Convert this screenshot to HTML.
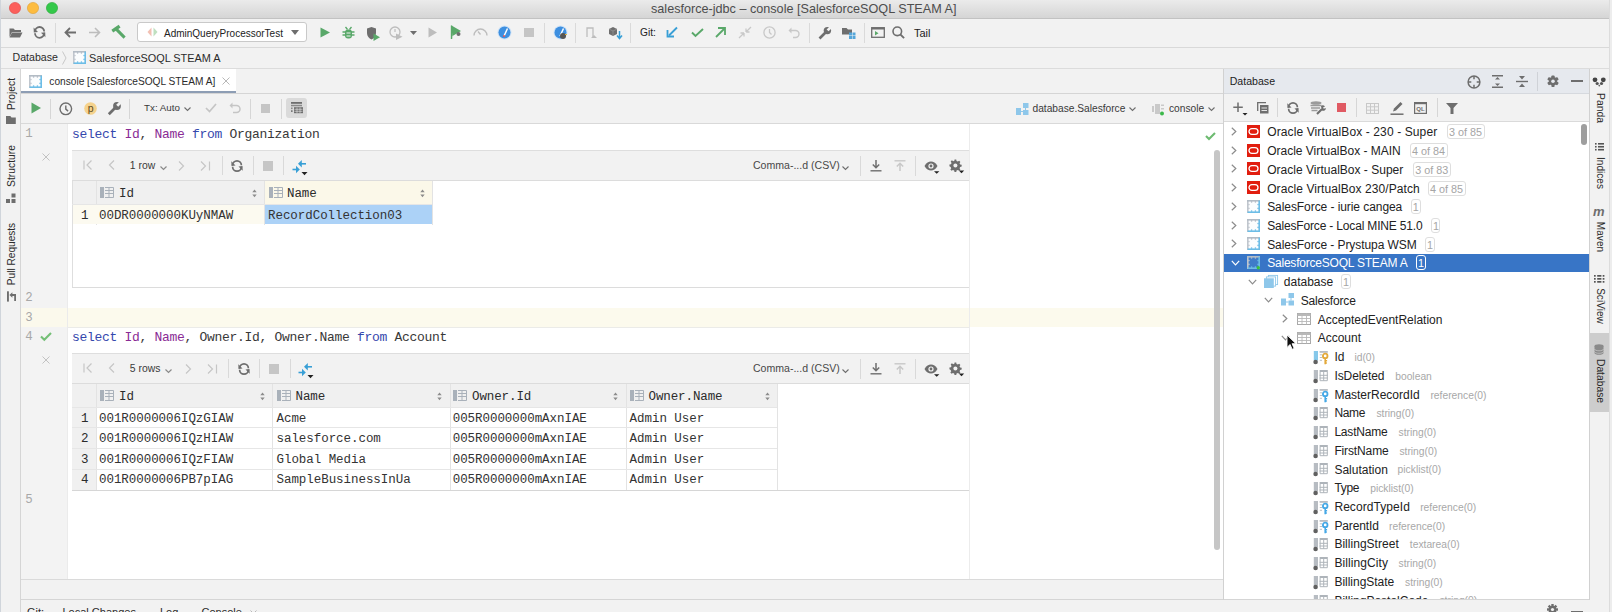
<!DOCTYPE html><html><head><meta charset="utf-8"><style>
html,body{margin:0;padding:0;width:1612px;height:612px;overflow:hidden;background:#f2f2f2;}
.r{position:absolute;display:block;}
.t{position:absolute;white-space:nowrap;}
svg{overflow:visible}
</style></head><body>
<div class="r" style="left:0px;top:0px;width:1612px;height:18px;background:linear-gradient(#ebebeb,#d5d5d5);"></div>
<div class="r" style="left:0px;top:18px;width:1612px;height:1px;background:#c2c2c2;"></div>
<svg class="r" style="left:8.5px;top:2px" width="12" height="12" viewBox="0 0 12 12"><circle cx="6" cy="6" r="5.6" fill="#fc605c" stroke="#df4744" stroke-width="0.6"/></svg>
<svg class="r" style="left:26.799999999999997px;top:2px" width="12" height="12" viewBox="0 0 12 12"><circle cx="6" cy="6" r="5.6" fill="#fdbc40" stroke="#de9f34" stroke-width="0.6"/></svg>
<svg class="r" style="left:45.6px;top:2px" width="12" height="12" viewBox="0 0 12 12"><circle cx="6" cy="6" r="5.6" fill="#34c84a" stroke="#27aa35" stroke-width="0.6"/></svg>
<div class="t" style="left:651.00px;top:1.57px;font-size:12.63px;line-height:14.11px;color:#4d4d4d;font-family:'Liberation Sans', sans-serif;">salesforce-jdbc – console [SalesforceSOQL STEAM A]</div>
<div class="r" style="left:0px;top:19px;width:1612px;height:28px;background:#f2f2f2;"></div>
<div class="r" style="left:0px;top:47px;width:1612px;height:1px;background:#d9d9d9;"></div>
<svg class="r" style="left:9px;top:27px" width="14" height="11" viewBox="0 0 14 11"><path d="M0.5 1.5h4l1.5 1.5h6v2H3L0.5 10z" fill="#6e6e6e"/><path d="M3 5.5h10.5L11 10.5H0.5z" fill="#6e6e6e"/></svg>
<svg class="r" style="left:33px;top:26px" width="13" height="13" viewBox="0 0 13 13"><path d="M2 5.6A4.6 4.6 0 0 1 11.2 5.6" fill="none" stroke="#6e6e6e" stroke-width="1.8"/><path d="M0.6 1.6L0.8 6.6 5 6.1z" fill="#6e6e6e"/><path d="M2 7.2A4.6 4.6 0 0 0 11.2 7.2" fill="none" stroke="#6e6e6e" stroke-width="1.8"/><path d="M12.4 11.2L12.2 6.3 8 6.8z" fill="#6e6e6e"/></svg>
<div class="r" style="left:55px;top:23px;width:1px;height:20px;background:#dadada;"></div>
<svg class="r" style="left:64px;top:27px" width="13" height="11" viewBox="0 0 13 11"><path d="M12 5.5H2M6 1L1.5 5.5 6 10" fill="none" stroke="#6e6e6e" stroke-width="1.8"/></svg>
<svg class="r" style="left:88px;top:27px" width="13" height="11" viewBox="0 0 13 11"><path d="M1 5.5h10M7 1l4.5 4.5L7 10" fill="none" stroke="#bdbdbd" stroke-width="1.6"/></svg>
<svg class="r" style="left:111px;top:25px" width="15" height="15" viewBox="0 0 15 15"><path d="M1.3 6.2L8.6 1.2" stroke="#59a869" stroke-width="3.3"/><path d="M4.8 3.6L13.6 12.6" stroke="#59a869" stroke-width="3"/></svg>
<div class="r" style="left:137px;top:22px;width:170px;height:20px;background:#ffffff;border:1px solid #c9c9c9;border-radius:3px;box-sizing:border-box;"></div>
<svg class="r" style="left:147px;top:27px" width="11" height="10" viewBox="0 0 11 10"><path d="M4.5 0.5L0.5 5l4 4.5z" fill="#f2c0b3"/><path d="M6.5 0.5l4 4.5-4 4.5z" fill="#bfe0c0"/></svg>
<div class="t" style="left:164.00px;top:27.55px;font-size:10px;line-height:11.17px;color:#222;font-family:'Liberation Sans', sans-serif;">AdminQueryProcessorTest</div>
<svg class="r" style="left:291px;top:30px" width="8" height="5" viewBox="0 0 8 5"><path d="M0 0h8L4 5z" fill="#6e6e6e"/></svg>
<svg class="r" style="left:320px;top:27px" width="10" height="11" viewBox="0 0 10 11"><path d="M0.5 0.5L10 5.5 0.5 10.5z" fill="#59a869"/></svg>
<svg class="r" style="left:342px;top:26px" width="13" height="13" viewBox="0 0 13 13"><path d="M3.5 1l2 2.5M9.5 1l-2 2.5" stroke="#59a869" stroke-width="1.3"/><rect x="3" y="3.5" width="7" height="9" rx="3" fill="#59a869"/><path d="M0.5 6h12M0.5 9h12" stroke="#59a869" stroke-width="1.3"/><path d="M4.5 7h4M4.5 10h4" stroke="#f2f2f2" stroke-width="1"/></svg>
<svg class="r" style="left:366px;top:27px" width="15" height="14" viewBox="0 0 15 14"><path d="M1 1.5L5.5 0 10 1.5v4.5c0 3-2 5.5-4.5 6.5C3 11.5 1 9 1 6z" fill="#6e6e6e"/><path d="M7.5 6.5l6.5 3.8-6.5 3.7z" fill="#59a869"/></svg>
<svg class="r" style="left:389px;top:26px" width="14" height="14" viewBox="0 0 14 14"><circle cx="6" cy="6" r="5" fill="none" stroke="#bdbdbd" stroke-width="1.3"/><path d="M6 3v3" stroke="#bdbdbd" stroke-width="1.2"/><path d="M7 7.5l6.5 3.2-6.5 3.3z" fill="#bdbdbd"/></svg>
<svg class="r" style="left:410px;top:31px" width="7" height="4" viewBox="0 0 7 4"><path d="M0 0h7L3.5 4z" fill="#6e6e6e"/></svg>
<svg class="r" style="left:428px;top:27px" width="9" height="11" viewBox="0 0 9 11"><path d="M0.5 0.5L9 5.5 0.5 10.5z" fill="#bdbdbd"/></svg>
<svg class="r" style="left:451px;top:25px" width="11" height="14" viewBox="0 0 11 14"><path d="M0.5 0.5l9.5 5.5L1.5 11 1.5 14z" fill="#59a869"/><path d="M0.5 0.5v13.5" stroke="#59a869" stroke-width="1.4"/><circle cx="7.5" cy="9" r="2" fill="#6e6e6e"/></svg>
<svg class="r" style="left:473px;top:28px" width="15" height="8" viewBox="0 0 15 8"><path d="M1 7.5a6.5 6.5 0 0 1 13 0" fill="none" stroke="#bdbdbd" stroke-width="1.4"/><path d="M5 3.5l2.5 3" stroke="#bdbdbd" stroke-width="1.3"/></svg>
<svg class="r" style="left:497px;top:25px" width="15" height="15" viewBox="0 0 15 15"><circle cx="7.5" cy="7.5" r="7" fill="#cfe3f7"/><circle cx="7.5" cy="7.5" r="6" fill="#3d8fe0"/><path d="M10.5 3.5L7 11" stroke="#fff" stroke-width="1.5"/><circle cx="7" cy="11" r="1" fill="#e05555"/></svg>
<svg class="r" style="left:524px;top:28px" width="10" height="9" viewBox="0 0 10 9"><rect width="10" height="9" fill="#c5c5c5"/></svg>
<div class="r" style="left:544px;top:23px;width:1px;height:20px;background:#dadada;"></div>
<svg class="r" style="left:553px;top:25px" width="15" height="15" viewBox="0 0 15 15"><circle cx="7.5" cy="7.5" r="7" fill="#cfe3f7"/><circle cx="7.5" cy="7.5" r="6" fill="#3d8fe0"/><path d="M10.5 3.5L7 11" stroke="#fff" stroke-width="1.5"/><circle cx="10" cy="11" r="3" fill="#555"/><path d="M12 9.5l2 0" stroke="#e0b040" stroke-width="1"/></svg>
<div class="r" style="left:575px;top:23px;width:1px;height:20px;background:#dadada;"></div>
<svg class="r" style="left:586px;top:27px" width="12" height="12" viewBox="0 0 12 12"><path d="M1 10V1h6v9" fill="none" stroke="#bdbdbd" stroke-width="1.3"/><path d="M5 11l3-3 3 3z" fill="#bdbdbd"/></svg>
<svg class="r" style="left:608px;top:26px" width="15" height="14" viewBox="0 0 15 14"><path d="M1 3l4-2 4 2v5l-4 2-4-2z" fill="#6e6e6e"/><path d="M1 3l4 2 4-2M5 5v5" stroke="#9a9a9a" stroke-width="0.7" fill="none"/><path d="M11.5 5v7M9 9.5l2.5 3 2.5-3" fill="none" stroke="#389fd6" stroke-width="1.5"/></svg>
<div class="r" style="left:630px;top:23px;width:1px;height:20px;background:#dadada;"></div>
<div class="t" style="left:640.00px;top:27.37px;font-size:10.2px;line-height:11.40px;color:#222;font-family:'Liberation Sans', sans-serif;">Git:</div>
<svg class="r" style="left:667px;top:27px" width="11" height="10" viewBox="0 0 11 10"><path d="M10 0.5L2 8.5" stroke="#389fd6" stroke-width="1.8"/><path d="M0.5 3v6.5H7" fill="none" stroke="#389fd6" stroke-width="1.8"/></svg>
<svg class="r" style="left:691px;top:28px" width="13" height="9" viewBox="0 0 13 9"><path d="M1 4.5l3.5 3.5L12 1" fill="none" stroke="#59a869" stroke-width="1.9"/></svg>
<svg class="r" style="left:715px;top:27px" width="11" height="11" viewBox="0 0 11 11"><path d="M1 10L9.5 1.5" stroke="#59a869" stroke-width="1.8"/><path d="M3 1h7v7" fill="none" stroke="#59a869" stroke-width="1.8"/></svg>
<svg class="r" style="left:738px;top:26px" width="14" height="13" viewBox="0 0 14 13"><path d="M1 12l5-5M6 7H2.5M6 7v3.5" fill="none" stroke="#c8c8c8" stroke-width="1.3"/><path d="M13 1L8 6M8 6h3.5M8 6V2.5" fill="none" stroke="#c8c8c8" stroke-width="1.3"/></svg>
<svg class="r" style="left:763px;top:26px" width="13" height="13" viewBox="0 0 13 13"><circle cx="6.5" cy="6.5" r="5.6" fill="none" stroke="#c8c8c8" stroke-width="1.3"/><path d="M6.5 3v3.5l2 2" fill="none" stroke="#c8c8c8" stroke-width="1.3"/></svg>
<svg class="r" style="left:788px;top:27px" width="12" height="12" viewBox="0 0 12 12"><path d="M3 3.5h4.5a3.5 3.5 0 0 1 0 7H5" fill="none" stroke="#c8c8c8" stroke-width="1.4"/><path d="M0.5 3.5L3.5 0.5v6z" fill="#c8c8c8"/></svg>
<div class="r" style="left:809px;top:23px;width:1px;height:20px;background:#dadada;"></div>
<svg class="r" style="left:818px;top:25.5px" width="14" height="14" viewBox="0 0 14 14"><path d="M1.5 12.5L7.5 6.5" stroke="#6e6e6e" stroke-width="2.6"/><circle cx="9.4" cy="4.6" r="3.7" fill="#6e6e6e"/><path d="M9.6 4.4L13.8 0.2" stroke="#f2f2f2" stroke-width="2.7"/></svg>
<svg class="r" style="left:842px;top:27px" width="14" height="12" viewBox="0 0 14 12"><path d="M0 1h4.5l1.5 1.5H10v5H0z" fill="#6e6e6e"/><rect x="7" y="5.5" width="3" height="3" fill="#55a6d9"/><rect x="10.5" y="5.5" width="3" height="3" fill="#55a6d9"/><rect x="7" y="9" width="3" height="3" fill="#55a6d9"/><rect x="10.5" y="9" width="3" height="3" fill="#55a6d9"/></svg>
<div class="r" style="left:864px;top:23px;width:1px;height:20px;background:#dadada;"></div>
<svg class="r" style="left:871px;top:27px" width="14" height="11" viewBox="0 0 14 11"><rect x="0.7" y="0.7" width="12.6" height="9.6" fill="none" stroke="#6e6e6e" stroke-width="1.3"/><rect x="0.7" y="0.7" width="12.6" height="1.8" fill="#6e6e6e"/><path d="M4 4v4.5l3.5-2.2z" fill="#59a869"/></svg>
<svg class="r" style="left:892px;top:26px" width="13" height="13" viewBox="0 0 13 13"><circle cx="5.3" cy="5.3" r="4.3" fill="none" stroke="#6e6e6e" stroke-width="1.6"/><path d="M8.3 8.3l3.8 3.8" stroke="#6e6e6e" stroke-width="1.9"/></svg>
<div class="t" style="left:914.00px;top:26.94px;font-size:11px;line-height:12.29px;color:#222;font-family:'Liberation Sans', sans-serif;">Tail</div>
<div class="r" style="left:0px;top:48px;width:1612px;height:20px;background:#f2f2f2;"></div>
<div class="r" style="left:0px;top:68px;width:1612px;height:1px;background:#dcdcdc;"></div>
<div class="t" style="left:12.50px;top:52.10px;font-size:10.6px;line-height:11.84px;color:#2b2b2b;font-family:'Liberation Sans', sans-serif;">Database</div>
<svg class="r" style="left:62px;top:51px" width="5" height="14" viewBox="0 0 5 14"><path d="M0.5 0.5L4 7 0.5 13.5" fill="none" stroke="#c8c8c8" stroke-width="1"/></svg>
<svg class="r" style="left:73px;top:50.5px" width="13" height="13" viewBox="0 0 13 13"><rect x="0" y="0" width="13" height="13" fill="#fbfdfe"/><rect x="0" y="0" width="1.6" height="13" fill="#c0c6cd"/><rect x="0" y="0" width="13" height="1.6" fill="#b3bcc5"/><rect x="11.4" y="0.6" width="1.6" height="12.4" fill="#6cbde6"/><rect x="0.6" y="11.4" width="12.4" height="1.6" fill="#6cbde6"/><circle cx="4.6" cy="1.9" r="0.8" fill="#b3bcc5"/><circle cx="8.4" cy="1.9" r="0.8" fill="#b3bcc5"/><circle cx="1.9" cy="4.6" r="0.8" fill="#c0c6cd"/><circle cx="1.9" cy="8.4" r="0.8" fill="#c0c6cd"/><circle cx="11.1" cy="4.6" r="0.8" fill="#6cbde6"/><circle cx="11.1" cy="8.4" r="0.8" fill="#6cbde6"/><circle cx="4.6" cy="11.1" r="0.8" fill="#6cbde6"/><circle cx="8.4" cy="11.1" r="0.8" fill="#6cbde6"/></svg>
<div class="t" style="left:89.00px;top:51.83px;font-size:10.9px;line-height:12.18px;color:#2b2b2b;font-family:'Liberation Sans', sans-serif;">SalesforceSOQL STEAM A</div>
<div class="r" style="left:0px;top:69px;width:20px;height:543px;background:#f2f2f2;"></div>
<div class="r" style="left:20px;top:69px;width:1px;height:543px;background:#d5d5d5;"></div>
<div class="r" style="left:0px;top:0px;width:1px;height:612px;background:#d0d5db;"></div>
<div class="t" style="left:12.1px;top:93.5px;font-size:10.3px;line-height:11.85px;color:#2b2b2b;font-family:'Liberation Sans', sans-serif;transform:translate(-50%,-50%) rotate(-90deg);">Project</div>
<svg class="r" style="left:6px;top:116px" width="10" height="8" viewBox="0 0 10 8"><path d="M0 0h4.3l1.2 1.6H9.8V8H0z" fill="#6e6e6e"/></svg>
<div class="t" style="left:12.1px;top:166px;font-size:10.3px;line-height:11.85px;color:#2b2b2b;font-family:'Liberation Sans', sans-serif;transform:translate(-50%,-50%) rotate(-90deg);">Structure</div>
<svg class="r" style="left:6px;top:193px" width="10" height="10" viewBox="0 0 10 10"><rect x="0" y="6" width="4" height="4" fill="#6e6e6e"/><rect x="5.5" y="6" width="4" height="4" fill="#6e6e6e"/><rect x="5.5" y="0.5" width="4" height="4" fill="#6e6e6e"/></svg>
<div class="t" style="left:12.1px;top:254px;font-size:10.1px;line-height:11.61px;color:#2b2b2b;font-family:'Liberation Sans', sans-serif;transform:translate(-50%,-50%) rotate(-90deg);">Pull Requests</div>
<svg class="r" style="left:6px;top:290.5px" width="11" height="11" viewBox="0 0 11 11"><rect x="1" y="0.3" width="1.9" height="10.3" fill="#6e6e6e"/><path d="M5.5 4H9.1V10" fill="none" stroke="#6e6e6e" stroke-width="1.8"/><path d="M3.4 4L6.4 1.2v5.6z" fill="#6e6e6e"/></svg>
<div class="r" style="left:21px;top:69px;width:1202px;height:24px;background:#f2f2f2;"></div>
<div class="r" style="left:21px;top:69px;width:215px;height:22px;background:#ffffff;"></div>
<div class="r" style="left:21px;top:91px;width:215px;height:2px;background:#8d9db4;"></div>
<div class="r" style="left:21px;top:93px;width:1202px;height:1px;background:#d5d5d5;"></div>
<svg class="r" style="left:29px;top:74.5px" width="13" height="13" viewBox="0 0 13 13"><rect x="0" y="0" width="13" height="13" fill="#fbfdfe"/><rect x="0" y="0" width="1.6" height="13" fill="#c0c6cd"/><rect x="0" y="0" width="13" height="1.6" fill="#b3bcc5"/><rect x="11.4" y="0.6" width="1.6" height="12.4" fill="#6cbde6"/><rect x="0.6" y="11.4" width="12.4" height="1.6" fill="#6cbde6"/><circle cx="4.6" cy="1.9" r="0.8" fill="#b3bcc5"/><circle cx="8.4" cy="1.9" r="0.8" fill="#b3bcc5"/><circle cx="1.9" cy="4.6" r="0.8" fill="#c0c6cd"/><circle cx="1.9" cy="8.4" r="0.8" fill="#c0c6cd"/><circle cx="11.1" cy="4.6" r="0.8" fill="#6cbde6"/><circle cx="11.1" cy="8.4" r="0.8" fill="#6cbde6"/><circle cx="4.6" cy="11.1" r="0.8" fill="#6cbde6"/><circle cx="8.4" cy="11.1" r="0.8" fill="#6cbde6"/></svg>
<div class="t" style="left:49.30px;top:75.79px;font-size:10.17px;line-height:11.36px;color:#2b2b2b;font-family:'Liberation Sans', sans-serif;">console [SalesforceSOQL STEAM A]</div>
<svg class="r" style="left:222px;top:77px" width="8" height="8" viewBox="0 0 8 8"><path d="M0.5 0.5l7 7M7.5 0.5l-7 7" stroke="#b8b8b8" stroke-width="1"/></svg>
<div class="r" style="left:21px;top:94px;width:1202px;height:29px;background:#f2f2f2;"></div>
<div class="r" style="left:21px;top:123px;width:1202px;height:1px;background:#d9d9d9;"></div>
<svg class="r" style="left:31px;top:102px" width="10" height="12" viewBox="0 0 10 12"><path d="M0.5 0.5L10 6 0.5 11.5z" fill="#59a869"/></svg>
<div class="r" style="left:50px;top:99px;width:1px;height:20px;background:#d6d6d6;"></div>
<svg class="r" style="left:59px;top:101.5px" width="14" height="14" viewBox="0 0 14 14"><circle cx="6.8" cy="6.8" r="5.8" fill="none" stroke="#6e6e6e" stroke-width="1.4"/><path d="M6.8 3.5v3.6l2.3 2" fill="none" stroke="#6e6e6e" stroke-width="1.4"/></svg>
<svg class="r" style="left:83.5px;top:101.5px" width="13" height="13" viewBox="0 0 13 13"><circle cx="6.5" cy="6.5" r="6.3" fill="#f5d28c"/><text x="6.6" y="10.3" font-size="10.5" font-family="Liberation Sans" fill="#5e4c22" text-anchor="middle">p</text></svg>
<svg class="r" style="left:107px;top:101px" width="15" height="15" viewBox="0 0 15 15"><path d="M1.8 13.2L8 7" stroke="#6e6e6e" stroke-width="2.7"/><circle cx="10" cy="5" r="3.9" fill="#6e6e6e"/><path d="M10.2 4.8L14.5 0.5" stroke="#f2f2f2" stroke-width="2.8"/></svg>
<div class="r" style="left:129px;top:99px;width:1px;height:20px;background:#d6d6d6;"></div>
<div class="t" style="left:144.00px;top:102.63px;font-size:9.8px;line-height:10.95px;color:#3a3a3a;font-family:'Liberation Sans', sans-serif;">Tx: Auto</div>
<svg class="r" style="left:184px;top:107px" width="7" height="5" viewBox="0 0 7 5"><path d="M0.5 0.5l3 3 3-3" fill="none" stroke="#6e6e6e" stroke-width="1.1"/></svg>
<svg class="r" style="left:205px;top:103px" width="12" height="10" viewBox="0 0 12 10"><path d="M1 5l3.5 3.5L11 1" fill="none" stroke="#c5c5c5" stroke-width="1.7"/></svg>
<svg class="r" style="left:229px;top:102px" width="12" height="12" viewBox="0 0 12 12"><path d="M3 3.5h4.5a3.5 3.5 0 0 1 0 7H4" fill="none" stroke="#c5c5c5" stroke-width="1.5"/><path d="M0.5 3.5L3.5 0.5v6z" fill="#c5c5c5"/></svg>
<div class="r" style="left:250px;top:99px;width:1px;height:20px;background:#d6d6d6;"></div>
<div class="r" style="left:261px;top:104px;width:9px;height:9px;background:#c5c5c5;"></div>
<div class="r" style="left:281px;top:99px;width:1px;height:20px;background:#d6d6d6;"></div>
<div class="r" style="left:286px;top:98px;width:21px;height:20px;background:#dadada;border-radius:3px;"></div>
<svg class="r" style="left:291px;top:102px" width="12" height="12" viewBox="0 0 12 12"><rect x="0" y="0" width="11" height="1.8" fill="#6e6e6e"/><rect x="0" y="2.8" width="11" height="1.5" fill="#8a8a8a"/><rect x="0" y="5.5" width="1.6" height="1.6" fill="#8a8a8a"/><rect x="0" y="8.3" width="1.6" height="1.6" fill="#6e6e6e"/><rect x="3" y="5.2" width="9" height="6" fill="#6e6e6e"/><path d="M3.5 7.3h8M3.5 9.3h8M6 5.5v5.5M9 5.5v5.5" stroke="#e8e8e8" stroke-width="0.6"/></svg>
<svg class="r" style="left:1016px;top:103px" width="13" height="12" viewBox="0 0 13 12"><rect x="0" y="5" width="5" height="7" fill="#8ec7ea"/><rect x="7" y="0" width="5.5" height="5" fill="#8ec7ea"/><rect x="7" y="7" width="5.5" height="5" fill="#8ec7ea"/><path d="M5 8.5h2M9.5 5v2" stroke="#8ec7ea" stroke-width="1"/></svg>
<div class="t" style="left:1032.50px;top:102.97px;font-size:10.2px;line-height:11.40px;color:#3a3a3a;font-family:'Liberation Sans', sans-serif;">database.Salesforce</div>
<svg class="r" style="left:1129px;top:107px" width="7" height="5" viewBox="0 0 7 5"><path d="M0.5 0.5l3 3 3-3" fill="none" stroke="#6e6e6e" stroke-width="1.1"/></svg>
<svg class="r" style="left:1152px;top:103px" width="14" height="13" viewBox="0 0 14 13"><rect x="0" y="3" width="2" height="6" fill="#c9c9c9"/><rect x="3" y="1" width="5" height="10" fill="#c9c9c9"/><rect x="9" y="1.5" width="3" height="1.5" fill="#c9c9c9"/><rect x="9" y="5" width="3" height="1.5" fill="#c9c9c9"/><circle cx="10" cy="10.5" r="2" fill="#3cb84a"/></svg>
<div class="t" style="left:1169.00px;top:102.97px;font-size:10.2px;line-height:11.40px;color:#3a3a3a;font-family:'Liberation Sans', sans-serif;">console</div>
<svg class="r" style="left:1208px;top:107px" width="7" height="5" viewBox="0 0 7 5"><path d="M0.5 0.5l3 3 3-3" fill="none" stroke="#6e6e6e" stroke-width="1.1"/></svg>
<div class="r" style="left:21px;top:124px;width:1202px;height:455px;background:#ffffff;"></div>
<div class="r" style="left:21px;top:124px;width:46px;height:455px;background:#f3f3f3;"></div>
<div class="r" style="left:67px;top:124px;width:1px;height:455px;background:#ebebeb;"></div>
<div class="r" style="left:969px;top:124px;width:1px;height:455px;background:#ececec;"></div>
<div class="r" style="left:21px;top:308px;width:46px;height:19px;background:#fbf9ec;"></div>
<div class="r" style="left:68px;top:308px;width:901px;height:19px;background:#fcfaed;"></div>
<div class="r" style="left:970px;top:308px;width:253px;height:19px;background:#fcfaed;"></div>
<div class="r" style="left:68px;top:327px;width:901px;height:1px;background:#ebebe8;"></div>
<div class="t" style="left:25.30px;top:127.28px;font-size:12.4px;line-height:14.05px;color:#a8a8a8;font-family:'Liberation Mono', monospace;letter-spacing:-0.3px;">1</div>
<div class="t" style="left:25.30px;top:291.28px;font-size:12.4px;line-height:14.05px;color:#a8a8a8;font-family:'Liberation Mono', monospace;letter-spacing:-0.3px;">2</div>
<div class="t" style="left:25.30px;top:310.78px;font-size:12.4px;line-height:14.05px;color:#a8a8a8;font-family:'Liberation Mono', monospace;letter-spacing:-0.3px;">3</div>
<div class="t" style="left:25.30px;top:330.28px;font-size:12.4px;line-height:14.05px;color:#a8a8a8;font-family:'Liberation Mono', monospace;letter-spacing:-0.3px;">4</div>
<div class="t" style="left:25.30px;top:493.48px;font-size:12.4px;line-height:14.05px;color:#a8a8a8;font-family:'Liberation Mono', monospace;letter-spacing:-0.3px;">5</div>
<svg class="r" style="left:41.5px;top:152.8px" width="8" height="8" viewBox="0 0 8 8"><path d="M0.5 0.5l7 7M7.5 0.5l-7 7" stroke="#c2c2c2" stroke-width="1"/></svg>
<svg class="r" style="left:41.5px;top:356px" width="8" height="8" viewBox="0 0 8 8"><path d="M0.5 0.5l7 7M7.5 0.5l-7 7" stroke="#c2c2c2" stroke-width="1"/></svg>
<svg class="r" style="left:39.5px;top:332px" width="12" height="9" viewBox="0 0 12 9"><path d="M1 4.5l3.3 3.3L11 1" fill="none" stroke="#74bf76" stroke-width="2.1"/></svg>
<div class="t" style="left:71.90px;top:127.58px;font-size:13px;line-height:14.73px;color:#383838;font-family:'Liberation Mono', monospace;letter-spacing:-0.3px;"><span style="color:#3448ad">select</span><span style="color:#383838"> </span><span style="color:#8a2b95">Id</span><span style="color:#383838">, </span><span style="color:#8a2b95">Name</span><span style="color:#383838"> </span><span style="color:#3448ad">from</span><span style="color:#383838"> Organization</span></div>
<div class="t" style="left:71.90px;top:331.18px;font-size:13px;line-height:14.73px;color:#383838;font-family:'Liberation Mono', monospace;letter-spacing:-0.3px;"><span style="color:#3448ad">select</span><span style="color:#383838"> </span><span style="color:#8a2b95">Id</span><span style="color:#383838">, </span><span style="color:#8a2b95">Name</span><span style="color:#383838">, Owner.Id, Owner.Name </span><span style="color:#3448ad">from</span><span style="color:#383838"> Account</span></div>
<svg class="r" style="left:1205px;top:132px" width="11" height="8" viewBox="0 0 11 8"><path d="M1 4l3 3 6-6" fill="none" stroke="#6dbb70" stroke-width="2.1"/></svg>
<div class="r" style="left:1213.5px;top:150px;width:6.5px;height:400px;background:#c6c6c6;border-radius:3.5px;"></div>
<div class="r" style="left:21px;top:579px;width:1202px;height:1px;background:#dadada;"></div>
<div class="r" style="left:21px;top:580px;width:1202px;height:19px;background:#f2f2f2;"></div>
<div class="r" style="left:72px;top:150px;width:897px;height:138px;background:#ffffff;box-sizing:border-box;border:1px solid #dedede;border-right:none;"></div>
<div class="r" style="left:72px;top:151px;width:897px;height:29px;background:#f2f2f2;"></div>
<div class="r" style="left:72px;top:180px;width:897px;height:1px;background:#dcdcdc;"></div>
<svg class="r" style="left:82.5px;top:160px" width="10" height="10" viewBox="0 0 10 10"><path d="M1 0.5v9M8.5 0.5L4 5l4.5 4.5" fill="none" stroke="#c6c6c6" stroke-width="1.2"/></svg>
<svg class="r" style="left:108px;top:160px" width="7" height="10" viewBox="0 0 7 10"><path d="M6 0.5L1.5 5 6 9.5" fill="none" stroke="#c6c6c6" stroke-width="1.2"/></svg>
<div class="t" style="left:129.80px;top:159.88px;font-size:10.4px;line-height:11.62px;color:#3a3a3a;font-family:'Liberation Sans', sans-serif;">1 row</div>
<svg class="r" style="left:159.78px;top:165.5px" width="7" height="5" viewBox="0 0 7 5"><path d="M0.5 0.5l3 3 3-3" fill="none" stroke="#8a8a8a" stroke-width="1.2"/></svg>
<div class="t" style="left:753.00px;top:160.25px;font-size:10.55px;line-height:11.79px;color:#484848;font-family:'Liberation Sans', sans-serif;">Comma-...d (CSV)</div>
<svg class="r" style="left:842px;top:165.8px" width="7" height="5" viewBox="0 0 7 5"><path d="M0.5 0.5l3 3 3-3" fill="none" stroke="#6e6e6e" stroke-width="1.1"/></svg>
<div class="r" style="left:860px;top:155.8px;width:1px;height:20px;background:#d9d9d9;"></div>
<svg class="r" style="left:870px;top:159.8px" width="12" height="12" viewBox="0 0 12 12"><path d="M6 0v7M2.8 4.5L6 7.7l3.2-3.2" fill="none" stroke="#6e6e6e" stroke-width="1.5"/><path d="M0.5 10.8h11" stroke="#6e6e6e" stroke-width="1.4"/></svg>
<svg class="r" style="left:894px;top:159.8px" width="12" height="12" viewBox="0 0 12 12"><path d="M6 11V4M2.8 6.5L6 3.3l3.2 3.2" fill="none" stroke="#c8c8c8" stroke-width="1.5"/><path d="M0.5 0.8h11" stroke="#c8c8c8" stroke-width="1.4"/></svg>
<div class="r" style="left:915px;top:155.8px;width:1px;height:20px;background:#d9d9d9;"></div>
<svg class="r" style="left:924px;top:160.8px" width="15" height="10" viewBox="0 0 15 10"><path d="M0.5 5C2.5 1.5 4.5 0.5 7 0.5S11.5 1.5 13.5 5C11.5 8.5 9.5 9.5 7 9.5S2.5 8.5 0.5 5z" fill="#6e6e6e"/><circle cx="7" cy="5" r="2.6" fill="#f2f2f2"/><circle cx="7" cy="5" r="1.4" fill="#6e6e6e"/><path d="M10 10.2h5.4l-2.7 2.6z" fill="#222"/></svg>
<svg class="r" style="left:949px;top:158.8px" width="15" height="14" viewBox="0 0 15 14"><path d="M6.5 0.5h2l0.4 1.8 1.5 0.7 1.6-1 1.4 1.4-1 1.6 0.7 1.5 1.8 0.4v2l-1.8 0.4-0.7 1.5 1 1.6-1.4 1.4-1.6-1-1.5 0.7-0.4 1.8h-2l-0.4-1.8-1.5-0.7-1.6 1-1.4-1.4 1-1.6-0.7-1.5L0.5 8.5v-2l1.8-0.4 0.7-1.5-1-1.6 1.4-1.4 1.6 1 1.5-0.7z" fill="#6e6e6e" transform="scale(0.85)"/><circle cx="6.4" cy="6.4" r="2" fill="#f2f2f2"/><path d="M9.8 11.6h5.4l-2.7 2.6z" fill="#222"/></svg>
<div class="r" style="left:221.5px;top:156.0px;width:1px;height:19px;background:#d9d9d9;"></div>
<div class="r" style="left:252.5px;top:156.0px;width:1px;height:19px;background:#d9d9d9;"></div>
<div class="r" style="left:283px;top:156.0px;width:1px;height:19px;background:#d9d9d9;"></div>
<svg class="r" style="left:178px;top:160.8px" width="7" height="10" viewBox="0 0 7 10"><path d="M1 0.5L5.5 5 1 9.5" fill="none" stroke="#c6c6c6" stroke-width="1.2"/></svg>
<svg class="r" style="left:200px;top:160.8px" width="11" height="10" viewBox="0 0 11 10"><path d="M1 0.5L5.5 5 1 9.5M9.5 0.5v9" fill="none" stroke="#c6c6c6" stroke-width="1.2"/></svg>
<svg class="r" style="left:231px;top:159.8px" width="12" height="12" viewBox="0 0 12 12"><path d="M1.6 5.2A4.4 4.4 0 0 1 10.4 5.2" fill="none" stroke="#6e6e6e" stroke-width="1.7"/><path d="M0.3 1.3L0.5 6.1 4.5 5.6z" fill="#6e6e6e"/><path d="M1.6 6.8A4.4 4.4 0 0 0 10.4 6.8" fill="none" stroke="#6e6e6e" stroke-width="1.7"/><path d="M11.7 10.7L11.5 5.9 7.5 6.4z" fill="#6e6e6e"/></svg>
<div class="r" style="left:262.5px;top:160.8px;width:10px;height:10px;background:#c6c6c6;"></div>
<svg class="r" style="left:291.5px;top:158.8px" width="16" height="17" viewBox="0 0 16 17"><path d="M0.5 10.5h4.5" stroke="#389fd6" stroke-width="1.6"/><path d="M4 6.8l3.8 3.7L4 14.2z" fill="#389fd6"/><path d="M9 4.8h5" stroke="#389fd6" stroke-width="1.6"/><path d="M9.8 1.1L6 4.8l3.8 3.7z" fill="#389fd6"/><path d="M9.5 13h6l-3 3.2z" fill="#222"/></svg>
<div class="r" style="left:73px;top:181px;width:191.5px;height:23px;background:#f0f0f0;"></div>
<div class="r" style="left:264.5px;top:181px;width:167.5px;height:23px;background:#fbf8e9;"></div>
<div class="r" style="left:96.4px;top:181px;width:1px;height:43.5px;background:#e3e3e3;"></div>
<div class="r" style="left:264px;top:181px;width:1px;height:43.5px;background:#e3e3e3;"></div>
<div class="r" style="left:432px;top:181px;width:1px;height:43.5px;background:#e3e3e3;"></div>
<div class="r" style="left:72px;top:204px;width:360px;height:1px;background:#e6e6e6;"></div>
<svg class="r" style="left:100px;top:187px" width="14" height="11" viewBox="0 0 14 11"><rect x="0" y="0" width="4" height="11" fill="#a9b1ba"/><rect x="5" y="0" width="9" height="11" fill="none"/><path d="M5 0.5h8.5v10H5M5 3.5h8.5M5 6.5h8.5M9 0.5v10" fill="none" stroke="#a9b1ba" stroke-width="1"/></svg>
<div class="t" style="left:119.00px;top:187.09px;font-size:12.5px;line-height:14.16px;color:#2b2b2b;font-family:'Liberation Mono', monospace;letter-spacing:-0.1px;">Id</div>
<svg class="r" style="left:251.5px;top:188.5px" width="5" height="9" viewBox="0 0 5 9"><path d="M0.3 3.3h4.4L2.5 0.6z M0.3 5.5h4.4L2.5 8.2z" fill="#8c8c8c"/></svg>
<svg class="r" style="left:268.5px;top:187px" width="14" height="11" viewBox="0 0 14 11"><rect x="0" y="0" width="4" height="11" fill="#a9b1ba"/><rect x="5" y="0" width="9" height="11" fill="none"/><path d="M5 0.5h8.5v10H5M5 3.5h8.5M5 6.5h8.5M9 0.5v10" fill="none" stroke="#a9b1ba" stroke-width="1"/></svg>
<div class="t" style="left:287.00px;top:187.09px;font-size:12.5px;line-height:14.16px;color:#2b2b2b;font-family:'Liberation Mono', monospace;letter-spacing:-0.1px;">Name</div>
<svg class="r" style="left:420px;top:188.5px" width="5" height="9" viewBox="0 0 5 9"><path d="M0.3 3.3h4.4L2.5 0.6z M0.3 5.5h4.4L2.5 8.2z" fill="#8c8c8c"/></svg>
<div class="r" style="left:73px;top:205px;width:191px;height:19px;background:#fcfaf0;"></div>
<div class="r" style="left:265px;top:205px;width:167px;height:19px;background:#acd2f7;"></div>
<div class="t" style="left:81.00px;top:209.09px;font-size:12.5px;line-height:14.16px;color:#2b2b2b;font-family:'Liberation Mono', monospace;">1</div>
<div class="t" style="left:99.00px;top:209.09px;font-size:12.5px;line-height:14.16px;color:#333333;font-family:'Liberation Mono', monospace;letter-spacing:-0.05px;">00DR0000000KUyNMAW</div>
<div class="t" style="left:268.00px;top:209.09px;font-size:12.5px;line-height:14.16px;color:#333333;font-family:'Liberation Mono', monospace;letter-spacing:-0.05px;">RecordCollection03</div>
<div class="r" style="left:72px;top:287px;width:897px;height:1px;background:#dcdcdc;"></div>
<div class="r" style="left:72px;top:353px;width:897px;height:138px;background:#ffffff;box-sizing:border-box;border:1px solid #dedede;border-right:none;"></div>
<div class="r" style="left:72px;top:354px;width:897px;height:29px;background:#f2f2f2;"></div>
<div class="r" style="left:72px;top:383px;width:897px;height:1px;background:#dcdcdc;"></div>
<svg class="r" style="left:82.5px;top:363px" width="10" height="10" viewBox="0 0 10 10"><path d="M1 0.5v9M8.5 0.5L4 5l4.5 4.5" fill="none" stroke="#c6c6c6" stroke-width="1.2"/></svg>
<svg class="r" style="left:108px;top:363px" width="7" height="10" viewBox="0 0 7 10"><path d="M6 0.5L1.5 5 6 9.5" fill="none" stroke="#c6c6c6" stroke-width="1.2"/></svg>
<div class="t" style="left:129.80px;top:362.88px;font-size:10.4px;line-height:11.62px;color:#3a3a3a;font-family:'Liberation Sans', sans-serif;">5 rows</div>
<svg class="r" style="left:164.98000000000002px;top:368.5px" width="7" height="5" viewBox="0 0 7 5"><path d="M0.5 0.5l3 3 3-3" fill="none" stroke="#8a8a8a" stroke-width="1.2"/></svg>
<div class="t" style="left:753.00px;top:363.25px;font-size:10.55px;line-height:11.79px;color:#484848;font-family:'Liberation Sans', sans-serif;">Comma-...d (CSV)</div>
<svg class="r" style="left:842px;top:368.8px" width="7" height="5" viewBox="0 0 7 5"><path d="M0.5 0.5l3 3 3-3" fill="none" stroke="#6e6e6e" stroke-width="1.1"/></svg>
<div class="r" style="left:860px;top:358.8px;width:1px;height:20px;background:#d9d9d9;"></div>
<svg class="r" style="left:870px;top:362.8px" width="12" height="12" viewBox="0 0 12 12"><path d="M6 0v7M2.8 4.5L6 7.7l3.2-3.2" fill="none" stroke="#6e6e6e" stroke-width="1.5"/><path d="M0.5 10.8h11" stroke="#6e6e6e" stroke-width="1.4"/></svg>
<svg class="r" style="left:894px;top:362.8px" width="12" height="12" viewBox="0 0 12 12"><path d="M6 11V4M2.8 6.5L6 3.3l3.2 3.2" fill="none" stroke="#c8c8c8" stroke-width="1.5"/><path d="M0.5 0.8h11" stroke="#c8c8c8" stroke-width="1.4"/></svg>
<div class="r" style="left:915px;top:358.8px;width:1px;height:20px;background:#d9d9d9;"></div>
<svg class="r" style="left:924px;top:363.8px" width="15" height="10" viewBox="0 0 15 10"><path d="M0.5 5C2.5 1.5 4.5 0.5 7 0.5S11.5 1.5 13.5 5C11.5 8.5 9.5 9.5 7 9.5S2.5 8.5 0.5 5z" fill="#6e6e6e"/><circle cx="7" cy="5" r="2.6" fill="#f2f2f2"/><circle cx="7" cy="5" r="1.4" fill="#6e6e6e"/><path d="M10 10.2h5.4l-2.7 2.6z" fill="#222"/></svg>
<svg class="r" style="left:949px;top:361.8px" width="15" height="14" viewBox="0 0 15 14"><path d="M6.5 0.5h2l0.4 1.8 1.5 0.7 1.6-1 1.4 1.4-1 1.6 0.7 1.5 1.8 0.4v2l-1.8 0.4-0.7 1.5 1 1.6-1.4 1.4-1.6-1-1.5 0.7-0.4 1.8h-2l-0.4-1.8-1.5-0.7-1.6 1-1.4-1.4 1-1.6-0.7-1.5L0.5 8.5v-2l1.8-0.4 0.7-1.5-1-1.6 1.4-1.4 1.6 1 1.5-0.7z" fill="#6e6e6e" transform="scale(0.85)"/><circle cx="6.4" cy="6.4" r="2" fill="#f2f2f2"/><path d="M9.8 11.6h5.4l-2.7 2.6z" fill="#222"/></svg>
<div class="r" style="left:228.0px;top:359.0px;width:1px;height:19px;background:#d9d9d9;"></div>
<div class="r" style="left:259.0px;top:359.0px;width:1px;height:19px;background:#d9d9d9;"></div>
<div class="r" style="left:289.5px;top:359.0px;width:1px;height:19px;background:#d9d9d9;"></div>
<svg class="r" style="left:184.5px;top:363.8px" width="7" height="10" viewBox="0 0 7 10"><path d="M1 0.5L5.5 5 1 9.5" fill="none" stroke="#c6c6c6" stroke-width="1.2"/></svg>
<svg class="r" style="left:206.5px;top:363.8px" width="11" height="10" viewBox="0 0 11 10"><path d="M1 0.5L5.5 5 1 9.5M9.5 0.5v9" fill="none" stroke="#c6c6c6" stroke-width="1.2"/></svg>
<svg class="r" style="left:237.5px;top:362.8px" width="12" height="12" viewBox="0 0 12 12"><path d="M1.6 5.2A4.4 4.4 0 0 1 10.4 5.2" fill="none" stroke="#6e6e6e" stroke-width="1.7"/><path d="M0.3 1.3L0.5 6.1 4.5 5.6z" fill="#6e6e6e"/><path d="M1.6 6.8A4.4 4.4 0 0 0 10.4 6.8" fill="none" stroke="#6e6e6e" stroke-width="1.7"/><path d="M11.7 10.7L11.5 5.9 7.5 6.4z" fill="#6e6e6e"/></svg>
<div class="r" style="left:269.0px;top:363.8px;width:10px;height:10px;background:#c6c6c6;"></div>
<svg class="r" style="left:298.0px;top:361.8px" width="16" height="17" viewBox="0 0 16 17"><path d="M0.5 10.5h4.5" stroke="#389fd6" stroke-width="1.6"/><path d="M4 6.8l3.8 3.7L4 14.2z" fill="#389fd6"/><path d="M9 4.8h5" stroke="#389fd6" stroke-width="1.6"/><path d="M9.8 1.1L6 4.8l3.8 3.7z" fill="#389fd6"/><path d="M9.5 13h6l-3 3.2z" fill="#222"/></svg>
<div class="r" style="left:72px;top:383.5px;width:705px;height:24px;background:#f0f0f0;"></div>
<div class="r" style="left:72px;top:407.5px;width:24.5px;height:82px;background:#f0f0f0;"></div>
<div class="r" style="left:96.4px;top:383.5px;width:1px;height:106px;background:#e3e3e3;"></div>
<div class="r" style="left:272.2px;top:383.5px;width:1px;height:106px;background:#e3e3e3;"></div>
<div class="r" style="left:449.5px;top:383.5px;width:1px;height:106px;background:#e3e3e3;"></div>
<div class="r" style="left:626px;top:383.5px;width:1px;height:106px;background:#e3e3e3;"></div>
<div class="r" style="left:777.4px;top:383.5px;width:1px;height:106px;background:#e3e3e3;"></div>
<div class="r" style="left:72px;top:407.3px;width:705px;height:1px;background:#e6e6e6;"></div>
<div class="r" style="left:72px;top:427.4px;width:705px;height:1px;background:#e6e6e6;"></div>
<div class="r" style="left:72px;top:448.2px;width:705px;height:1px;background:#e6e6e6;"></div>
<div class="r" style="left:72px;top:468.6px;width:705px;height:1px;background:#e6e6e6;"></div>
<div class="r" style="left:72px;top:489.5px;width:897px;height:1px;background:#d6d6d6;"></div>
<svg class="r" style="left:100px;top:390px" width="14" height="11" viewBox="0 0 14 11"><rect x="0" y="0" width="4" height="11" fill="#a9b1ba"/><rect x="5" y="0" width="9" height="11" fill="none"/><path d="M5 0.5h8.5v10H5M5 3.5h8.5M5 6.5h8.5M9 0.5v10" fill="none" stroke="#a9b1ba" stroke-width="1"/></svg>
<div class="t" style="left:119.00px;top:390.09px;font-size:12.5px;line-height:14.16px;color:#2b2b2b;font-family:'Liberation Mono', monospace;letter-spacing:-0.1px;">Id</div>
<svg class="r" style="left:259.5px;top:391.5px" width="5" height="9" viewBox="0 0 5 9"><path d="M0.3 3.3h4.4L2.5 0.6z M0.3 5.5h4.4L2.5 8.2z" fill="#8c8c8c"/></svg>
<svg class="r" style="left:277px;top:390px" width="14" height="11" viewBox="0 0 14 11"><rect x="0" y="0" width="4" height="11" fill="#a9b1ba"/><rect x="5" y="0" width="9" height="11" fill="none"/><path d="M5 0.5h8.5v10H5M5 3.5h8.5M5 6.5h8.5M9 0.5v10" fill="none" stroke="#a9b1ba" stroke-width="1"/></svg>
<div class="t" style="left:295.50px;top:390.09px;font-size:12.5px;line-height:14.16px;color:#2b2b2b;font-family:'Liberation Mono', monospace;letter-spacing:-0.1px;">Name</div>
<svg class="r" style="left:436.5px;top:391.5px" width="5" height="9" viewBox="0 0 5 9"><path d="M0.3 3.3h4.4L2.5 0.6z M0.3 5.5h4.4L2.5 8.2z" fill="#8c8c8c"/></svg>
<svg class="r" style="left:453.4px;top:390px" width="14" height="11" viewBox="0 0 14 11"><rect x="0" y="0" width="4" height="11" fill="#a9b1ba"/><rect x="5" y="0" width="9" height="11" fill="none"/><path d="M5 0.5h8.5v10H5M5 3.5h8.5M5 6.5h8.5M9 0.5v10" fill="none" stroke="#a9b1ba" stroke-width="1"/></svg>
<div class="t" style="left:472.00px;top:390.09px;font-size:12.5px;line-height:14.16px;color:#2b2b2b;font-family:'Liberation Mono', monospace;letter-spacing:-0.1px;">Owner.Id</div>
<svg class="r" style="left:613px;top:391.5px" width="5" height="9" viewBox="0 0 5 9"><path d="M0.3 3.3h4.4L2.5 0.6z M0.3 5.5h4.4L2.5 8.2z" fill="#8c8c8c"/></svg>
<svg class="r" style="left:630px;top:390px" width="14" height="11" viewBox="0 0 14 11"><rect x="0" y="0" width="4" height="11" fill="#a9b1ba"/><rect x="5" y="0" width="9" height="11" fill="none"/><path d="M5 0.5h8.5v10H5M5 3.5h8.5M5 6.5h8.5M9 0.5v10" fill="none" stroke="#a9b1ba" stroke-width="1"/></svg>
<div class="t" style="left:648.50px;top:390.09px;font-size:12.5px;line-height:14.16px;color:#2b2b2b;font-family:'Liberation Mono', monospace;letter-spacing:-0.1px;">Owner.Name</div>
<svg class="r" style="left:764.5px;top:391.5px" width="5" height="9" viewBox="0 0 5 9"><path d="M0.3 3.3h4.4L2.5 0.6z M0.3 5.5h4.4L2.5 8.2z" fill="#8c8c8c"/></svg>
<div class="t" style="left:81.00px;top:411.79px;font-size:12.5px;line-height:14.16px;color:#2b2b2b;font-family:'Liberation Mono', monospace;">1</div>
<div class="t" style="left:99.00px;top:411.79px;font-size:12.5px;line-height:14.16px;color:#333333;font-family:'Liberation Mono', monospace;letter-spacing:-0.05px;">001R0000006IQzGIAW</div>
<div class="t" style="left:276.50px;top:411.79px;font-size:12.5px;line-height:14.16px;color:#333333;font-family:'Liberation Mono', monospace;letter-spacing:-0.05px;">Acme</div>
<div class="t" style="left:452.70px;top:411.79px;font-size:12.5px;line-height:14.16px;color:#333333;font-family:'Liberation Mono', monospace;letter-spacing:-0.05px;">005R0000000mAxnIAE</div>
<div class="t" style="left:629.60px;top:411.79px;font-size:12.5px;line-height:14.16px;color:#333333;font-family:'Liberation Mono', monospace;letter-spacing:-0.05px;">Admin User</div>
<div class="t" style="left:81.00px;top:432.24px;font-size:12.5px;line-height:14.16px;color:#2b2b2b;font-family:'Liberation Mono', monospace;">2</div>
<div class="t" style="left:99.00px;top:432.24px;font-size:12.5px;line-height:14.16px;color:#333333;font-family:'Liberation Mono', monospace;letter-spacing:-0.05px;">001R0000006IQzHIAW</div>
<div class="t" style="left:276.50px;top:432.24px;font-size:12.5px;line-height:14.16px;color:#333333;font-family:'Liberation Mono', monospace;letter-spacing:-0.05px;">salesforce.com</div>
<div class="t" style="left:452.70px;top:432.24px;font-size:12.5px;line-height:14.16px;color:#333333;font-family:'Liberation Mono', monospace;letter-spacing:-0.05px;">005R0000000mAxnIAE</div>
<div class="t" style="left:629.60px;top:432.24px;font-size:12.5px;line-height:14.16px;color:#333333;font-family:'Liberation Mono', monospace;letter-spacing:-0.05px;">Admin User</div>
<div class="t" style="left:81.00px;top:452.69px;font-size:12.5px;line-height:14.16px;color:#2b2b2b;font-family:'Liberation Mono', monospace;">3</div>
<div class="t" style="left:99.00px;top:452.69px;font-size:12.5px;line-height:14.16px;color:#333333;font-family:'Liberation Mono', monospace;letter-spacing:-0.05px;">001R0000006IQzFIAW</div>
<div class="t" style="left:276.50px;top:452.69px;font-size:12.5px;line-height:14.16px;color:#333333;font-family:'Liberation Mono', monospace;letter-spacing:-0.05px;">Global Media</div>
<div class="t" style="left:452.70px;top:452.69px;font-size:12.5px;line-height:14.16px;color:#333333;font-family:'Liberation Mono', monospace;letter-spacing:-0.05px;">005R0000000mAxnIAE</div>
<div class="t" style="left:629.60px;top:452.69px;font-size:12.5px;line-height:14.16px;color:#333333;font-family:'Liberation Mono', monospace;letter-spacing:-0.05px;">Admin User</div>
<div class="t" style="left:81.00px;top:473.14px;font-size:12.5px;line-height:14.16px;color:#2b2b2b;font-family:'Liberation Mono', monospace;">4</div>
<div class="t" style="left:99.00px;top:473.14px;font-size:12.5px;line-height:14.16px;color:#333333;font-family:'Liberation Mono', monospace;letter-spacing:-0.05px;">001R0000006PB7pIAG</div>
<div class="t" style="left:276.50px;top:473.14px;font-size:12.5px;line-height:14.16px;color:#333333;font-family:'Liberation Mono', monospace;letter-spacing:-0.05px;">SampleBusinessInUa</div>
<div class="t" style="left:452.70px;top:473.14px;font-size:12.5px;line-height:14.16px;color:#333333;font-family:'Liberation Mono', monospace;letter-spacing:-0.05px;">005R0000000mAxnIAE</div>
<div class="t" style="left:629.60px;top:473.14px;font-size:12.5px;line-height:14.16px;color:#333333;font-family:'Liberation Mono', monospace;letter-spacing:-0.05px;">Admin User</div>
<div class="r" style="left:21px;top:599px;width:1591px;height:1px;background:#d5d5d5;"></div>
<div class="r" style="left:21px;top:600px;width:1591px;height:12px;background:#f2f2f2;"></div>
<div class="t" style="left:27.00px;top:606.34px;font-size:11px;line-height:12.29px;color:#2b2b2b;font-family:'Liberation Sans', sans-serif;">Git:</div>
<div class="t" style="left:62.50px;top:606.34px;font-size:11px;line-height:12.29px;color:#2b2b2b;font-family:'Liberation Sans', sans-serif;">Local Changes</div>
<div class="t" style="left:160.00px;top:606.34px;font-size:11px;line-height:12.29px;color:#2b2b2b;font-family:'Liberation Sans', sans-serif;">Log</div>
<div class="t" style="left:201.50px;top:606.34px;font-size:11px;line-height:12.29px;color:#2b2b2b;font-family:'Liberation Sans', sans-serif;">Console</div>
<svg class="r" style="left:250px;top:610px" width="7" height="7" viewBox="0 0 7 7"><path d="M0.5 0.5l6 6M6.5 0.5l-6 6" stroke="#b8b8b8" stroke-width="1"/></svg>
<div class="r" style="left:1223px;top:69px;width:1px;height:531px;background:#d1d1d1;"></div>
<div class="r" style="left:1224px;top:69px;width:365px;height:24px;background:#e6e9ee;"></div>
<div class="r" style="left:1224px;top:93px;width:365px;height:1px;background:#d6d9de;"></div>
<div class="t" style="left:1229.70px;top:76.20px;font-size:10.6px;line-height:11.84px;color:#222;font-family:'Liberation Sans', sans-serif;">Database</div>
<svg class="r" style="left:1466.5px;top:74.5px" width="14" height="14" viewBox="0 0 14 14"><circle cx="7" cy="7" r="5.9" fill="none" stroke="#6e6e6e" stroke-width="1.5"/><path d="M7 1v3.3M7 9.7V13M1 7h3.3M9.7 7H13" stroke="#6e6e6e" stroke-width="1.5"/></svg>
<svg class="r" style="left:1492px;top:74.5px" width="11" height="13" viewBox="0 0 11 13"><path d="M0 0.7h11M0 12.3h11" stroke="#6e6e6e" stroke-width="1.4"/><path d="M3 4.5h5L5.5 2z M3 8.5h5L5.5 11z" fill="#6e6e6e"/></svg>
<svg class="r" style="left:1516px;top:74.5px" width="12" height="13" viewBox="0 0 12 13"><path d="M0 6.5h12" stroke="#6e6e6e" stroke-width="1.4"/><path d="M3 1h6L6 4.5z M3 12h6L6 8.5z" fill="#6e6e6e"/></svg>
<div class="r" style="left:1537px;top:72px;width:1px;height:19px;background:#cfd2d7;"></div>
<svg class="r" style="left:1546.5px;top:75px" width="12" height="12" viewBox="0 0 12 12"><g transform="translate(6 6.2)"><circle r="4.1" fill="#6e6e6e"/><rect x="-1.6" y="-5.8" width="3.2" height="3" rx="0.8" fill="#6e6e6e" transform="rotate(0)"/><rect x="-1.6" y="-5.8" width="3.2" height="3" rx="0.8" fill="#6e6e6e" transform="rotate(60)"/><rect x="-1.6" y="-5.8" width="3.2" height="3" rx="0.8" fill="#6e6e6e" transform="rotate(120)"/><rect x="-1.6" y="-5.8" width="3.2" height="3" rx="0.8" fill="#6e6e6e" transform="rotate(180)"/><rect x="-1.6" y="-5.8" width="3.2" height="3" rx="0.8" fill="#6e6e6e" transform="rotate(240)"/><rect x="-1.6" y="-5.8" width="3.2" height="3" rx="0.8" fill="#6e6e6e" transform="rotate(300)"/><circle r="1.8" fill="#e6e9ee"/></g></svg>
<div class="r" style="left:1571px;top:80.3px;width:12px;height:2px;background:#6e6e6e;"></div>
<div class="r" style="left:1224px;top:94px;width:365px;height:27px;background:#f2f2f2;"></div>
<div class="r" style="left:1224px;top:121px;width:365px;height:1px;background:#dadada;"></div>
<svg class="r" style="left:1232.5px;top:102px" width="14" height="14" viewBox="0 0 14 14"><path d="M5 0.5v9.5M0.3 5.2h9.5" stroke="#6e6e6e" stroke-width="1.5"/><path d="M9.5 11h5l-2.5 2.5z" fill="#222"/></svg>
<svg class="r" style="left:1256.5px;top:102px" width="12" height="12" viewBox="0 0 12 12"><path d="M0.7 9V0.7H9" fill="none" stroke="#6e6e6e" stroke-width="1.3"/><rect x="3" y="3" width="8.5" height="8.5" fill="#6e6e6e"/><path d="M4.5 6h5.5M4.5 8.5h5.5" stroke="#f2f2f2" stroke-width="0.9"/></svg>
<div class="r" style="left:1277px;top:98px;width:1px;height:19px;background:#d6d6d6;"></div>
<svg class="r" style="left:1287px;top:102px" width="12" height="12" viewBox="0 0 12 12"><path d="M1.6 5.2A4.4 4.4 0 0 1 10.4 5.2" fill="none" stroke="#6e6e6e" stroke-width="1.7"/><path d="M0.3 1.3L0.5 6.1 4.5 5.6z" fill="#6e6e6e"/><path d="M1.6 6.8A4.4 4.4 0 0 0 10.4 6.8" fill="none" stroke="#6e6e6e" stroke-width="1.7"/><path d="M11.7 10.7L11.5 5.9 7.5 6.4z" fill="#6e6e6e"/></svg>
<svg class="r" style="left:1310px;top:101px" width="16" height="14" viewBox="0 0 16 14"><ellipse cx="6" cy="2" rx="5.5" ry="1.8" fill="#9a9a9a"/><path d="M0.5 4.5h11M1 7h9M1.5 9.5h6" stroke="#9a9a9a" stroke-width="1.3"/><path d="M7 13l5-5" stroke="#6e6e6e" stroke-width="2.2"/><path d="M11 5a2.5 2.5 0 0 1 4 0.5l-2 1 0.8 1.2 2-0.8a2.5 2.5 0 0 1-4 2.3z" fill="#6e6e6e"/></svg>
<div class="r" style="left:1337px;top:103px;width:9px;height:9px;background:#e05a63;"></div>
<div class="r" style="left:1356px;top:98px;width:1px;height:19px;background:#d6d6d6;"></div>
<svg class="r" style="left:1366px;top:103px" width="13" height="11" viewBox="0 0 13 11"><rect x="0.5" y="0.5" width="12" height="10" fill="none" stroke="#c8c8c8" stroke-width="1"/><path d="M0.5 3.8h12M0.5 7.2h12M4.5 0.5v10M8.5 0.5v10" stroke="#c8c8c8" stroke-width="1"/></svg>
<svg class="r" style="left:1389.5px;top:101px" width="14" height="14" viewBox="0 0 14 14"><path d="M3 10.5l1-3 6.5-6.5 2 2L6 9.5z" fill="#6e6e6e"/><path d="M0.5 13.2h13" stroke="#6e6e6e" stroke-width="1.5"/></svg>
<svg class="r" style="left:1414px;top:102px" width="13" height="12" viewBox="0 0 13 12"><rect x="0.6" y="0.6" width="11.8" height="10.8" fill="none" stroke="#6e6e6e" stroke-width="1.2"/><rect x="0.6" y="0.6" width="11.8" height="1.6" fill="#6e6e6e"/><text x="6.5" y="9.3" font-size="6" font-family="Liberation Sans" font-weight="bold" fill="#6e6e6e" text-anchor="middle">QL</text></svg>
<div class="r" style="left:1436.5px;top:98px;width:1px;height:19px;background:#d6d6d6;"></div>
<svg class="r" style="left:1445.5px;top:102.5px" width="12" height="11" viewBox="0 0 12 11"><path d="M0 0h12L7.5 5v6h-3V5z" fill="#6e6e6e"/></svg>
<div class="r" style="left:1224px;top:122px;width:365px;height:477px;background:#ffffff;"></div>
<div class="r" style="left:1580.5px;top:123.5px;width:6px;height:21px;background:#9e9e9e;border-radius:3px;"></div>
<div class="r" style="left:1224px;top:254px;width:365px;height:18px;background:#3875c6;"></div>
<svg class="r" style="left:1231px;top:127.0px" width="6" height="9" viewBox="0 0 6 9"><path d="M0.8 0.8l4 3.7-4 3.7" fill="none" stroke="#8c8c8c" stroke-width="1.2"/></svg>
<svg class="r" style="left:1247px;top:125.0px" width="13" height="13" viewBox="0 0 13 13"><rect width="13" height="13" fill="#e11d0e"/><rect x="2" y="3.6" width="9" height="5.8" rx="2.9" fill="none" stroke="#fff" stroke-width="1.3"/></svg>
<div class="t" style="left:1267.20px;top:126.44px;font-size:12px;line-height:13.41px;color:#222;font-family:'Liberation Sans', sans-serif;letter-spacing:0.116px;">Oracle VirtualBox - 230 - Super</div>
<div class="r" style="left:1446.5px;top:124.3px;width:38px;height:15px;box-sizing:border-box;border:1px solid #dedede;border-radius:3px;"></div>
<div class="t" style="left:1446.50px;top:126.42px;font-size:10.8px;line-height:12.07px;color:#a5a5a5;font-family:'Liberation Sans', sans-serif;width:38px;text-align:center;">3 of 85</div>
<svg class="r" style="left:1231px;top:145.72px" width="6" height="9" viewBox="0 0 6 9"><path d="M0.8 0.8l4 3.7-4 3.7" fill="none" stroke="#8c8c8c" stroke-width="1.2"/></svg>
<svg class="r" style="left:1247px;top:143.72px" width="13" height="13" viewBox="0 0 13 13"><rect width="13" height="13" fill="#e11d0e"/><rect x="2" y="3.6" width="9" height="5.8" rx="2.9" fill="none" stroke="#fff" stroke-width="1.3"/></svg>
<div class="t" style="left:1267.20px;top:145.16px;font-size:12px;line-height:13.41px;color:#222;font-family:'Liberation Sans', sans-serif;letter-spacing:-0.011px;">Oracle VirtualBox - MAIN</div>
<div class="r" style="left:1409.5px;top:143.0px;width:38px;height:15px;box-sizing:border-box;border:1px solid #dedede;border-radius:3px;"></div>
<div class="t" style="left:1409.50px;top:145.14px;font-size:10.8px;line-height:12.07px;color:#a5a5a5;font-family:'Liberation Sans', sans-serif;width:38px;text-align:center;">4 of 84</div>
<svg class="r" style="left:1231px;top:164.44px" width="6" height="9" viewBox="0 0 6 9"><path d="M0.8 0.8l4 3.7-4 3.7" fill="none" stroke="#8c8c8c" stroke-width="1.2"/></svg>
<svg class="r" style="left:1247px;top:162.44px" width="13" height="13" viewBox="0 0 13 13"><rect width="13" height="13" fill="#e11d0e"/><rect x="2" y="3.6" width="9" height="5.8" rx="2.9" fill="none" stroke="#fff" stroke-width="1.3"/></svg>
<div class="t" style="left:1267.20px;top:163.88px;font-size:12px;line-height:13.41px;color:#222;font-family:'Liberation Sans', sans-serif;letter-spacing:0.011px;">Oracle VirtualBox - Super</div>
<div class="r" style="left:1412.8px;top:161.7px;width:38px;height:15px;box-sizing:border-box;border:1px solid #dedede;border-radius:3px;"></div>
<div class="t" style="left:1412.80px;top:163.86px;font-size:10.8px;line-height:12.07px;color:#a5a5a5;font-family:'Liberation Sans', sans-serif;width:38px;text-align:center;">3 of 83</div>
<svg class="r" style="left:1231px;top:183.16px" width="6" height="9" viewBox="0 0 6 9"><path d="M0.8 0.8l4 3.7-4 3.7" fill="none" stroke="#8c8c8c" stroke-width="1.2"/></svg>
<svg class="r" style="left:1247px;top:181.16px" width="13" height="13" viewBox="0 0 13 13"><rect width="13" height="13" fill="#e11d0e"/><rect x="2" y="3.6" width="9" height="5.8" rx="2.9" fill="none" stroke="#fff" stroke-width="1.3"/></svg>
<div class="t" style="left:1267.20px;top:182.60px;font-size:12px;line-height:13.41px;color:#222;font-family:'Liberation Sans', sans-serif;letter-spacing:0.075px;">Oracle VirtualBox 230/Patch</div>
<div class="r" style="left:1427.6px;top:180.5px;width:38px;height:15px;box-sizing:border-box;border:1px solid #dedede;border-radius:3px;"></div>
<div class="t" style="left:1427.60px;top:182.58px;font-size:10.8px;line-height:12.07px;color:#a5a5a5;font-family:'Liberation Sans', sans-serif;width:38px;text-align:center;">4 of 85</div>
<svg class="r" style="left:1231px;top:201.88px" width="6" height="9" viewBox="0 0 6 9"><path d="M0.8 0.8l4 3.7-4 3.7" fill="none" stroke="#8c8c8c" stroke-width="1.2"/></svg>
<svg class="r" style="left:1247px;top:199.88px" width="13" height="13" viewBox="0 0 13 13"><rect x="0" y="0" width="13" height="13" fill="#fbfdfe"/><rect x="0" y="0" width="1.6" height="13" fill="#c0c6cd"/><rect x="0" y="0" width="13" height="1.6" fill="#b3bcc5"/><rect x="11.4" y="0.6" width="1.6" height="12.4" fill="#6cbde6"/><rect x="0.6" y="11.4" width="12.4" height="1.6" fill="#6cbde6"/><circle cx="4.6" cy="1.9" r="0.8" fill="#b3bcc5"/><circle cx="8.4" cy="1.9" r="0.8" fill="#b3bcc5"/><circle cx="1.9" cy="4.6" r="0.8" fill="#c0c6cd"/><circle cx="1.9" cy="8.4" r="0.8" fill="#c0c6cd"/><circle cx="11.1" cy="4.6" r="0.8" fill="#6cbde6"/><circle cx="11.1" cy="8.4" r="0.8" fill="#6cbde6"/><circle cx="4.6" cy="11.1" r="0.8" fill="#6cbde6"/><circle cx="8.4" cy="11.1" r="0.8" fill="#6cbde6"/></svg>
<div class="t" style="left:1267.20px;top:201.32px;font-size:12px;line-height:13.41px;color:#222;font-family:'Liberation Sans', sans-serif;letter-spacing:-0.069px;">SalesForce - iurie cangea</div>
<div class="r" style="left:1410.8px;top:199.2px;width:10px;height:15px;box-sizing:border-box;border:1px solid #dedede;border-radius:3px;"></div>
<div class="t" style="left:1410.80px;top:201.30px;font-size:10.8px;line-height:12.07px;color:#a5a5a5;font-family:'Liberation Sans', sans-serif;width:10px;text-align:center;">1</div>
<svg class="r" style="left:1231px;top:220.6px" width="6" height="9" viewBox="0 0 6 9"><path d="M0.8 0.8l4 3.7-4 3.7" fill="none" stroke="#8c8c8c" stroke-width="1.2"/></svg>
<svg class="r" style="left:1247px;top:218.6px" width="13" height="13" viewBox="0 0 13 13"><rect x="0" y="0" width="13" height="13" fill="#fbfdfe"/><rect x="0" y="0" width="1.6" height="13" fill="#c0c6cd"/><rect x="0" y="0" width="13" height="1.6" fill="#b3bcc5"/><rect x="11.4" y="0.6" width="1.6" height="12.4" fill="#6cbde6"/><rect x="0.6" y="11.4" width="12.4" height="1.6" fill="#6cbde6"/><circle cx="4.6" cy="1.9" r="0.8" fill="#b3bcc5"/><circle cx="8.4" cy="1.9" r="0.8" fill="#b3bcc5"/><circle cx="1.9" cy="4.6" r="0.8" fill="#c0c6cd"/><circle cx="1.9" cy="8.4" r="0.8" fill="#c0c6cd"/><circle cx="11.1" cy="4.6" r="0.8" fill="#6cbde6"/><circle cx="11.1" cy="8.4" r="0.8" fill="#6cbde6"/><circle cx="4.6" cy="11.1" r="0.8" fill="#6cbde6"/><circle cx="8.4" cy="11.1" r="0.8" fill="#6cbde6"/></svg>
<div class="t" style="left:1267.20px;top:220.04px;font-size:12px;line-height:13.41px;color:#222;font-family:'Liberation Sans', sans-serif;letter-spacing:-0.17px;">SalesForce - Local MINE 51.0</div>
<div class="r" style="left:1431.4px;top:217.9px;width:9px;height:15px;box-sizing:border-box;border:1px solid #dedede;border-radius:3px;"></div>
<div class="t" style="left:1431.40px;top:220.02px;font-size:10.8px;line-height:12.07px;color:#a5a5a5;font-family:'Liberation Sans', sans-serif;width:9px;text-align:center;">1</div>
<svg class="r" style="left:1231px;top:239.32px" width="6" height="9" viewBox="0 0 6 9"><path d="M0.8 0.8l4 3.7-4 3.7" fill="none" stroke="#8c8c8c" stroke-width="1.2"/></svg>
<svg class="r" style="left:1247px;top:237.32px" width="13" height="13" viewBox="0 0 13 13"><rect x="0" y="0" width="13" height="13" fill="#fbfdfe"/><rect x="0" y="0" width="1.6" height="13" fill="#c0c6cd"/><rect x="0" y="0" width="13" height="1.6" fill="#b3bcc5"/><rect x="11.4" y="0.6" width="1.6" height="12.4" fill="#6cbde6"/><rect x="0.6" y="11.4" width="12.4" height="1.6" fill="#6cbde6"/><circle cx="4.6" cy="1.9" r="0.8" fill="#b3bcc5"/><circle cx="8.4" cy="1.9" r="0.8" fill="#b3bcc5"/><circle cx="1.9" cy="4.6" r="0.8" fill="#c0c6cd"/><circle cx="1.9" cy="8.4" r="0.8" fill="#c0c6cd"/><circle cx="11.1" cy="4.6" r="0.8" fill="#6cbde6"/><circle cx="11.1" cy="8.4" r="0.8" fill="#6cbde6"/><circle cx="4.6" cy="11.1" r="0.8" fill="#6cbde6"/><circle cx="8.4" cy="11.1" r="0.8" fill="#6cbde6"/></svg>
<div class="t" style="left:1267.20px;top:238.76px;font-size:12px;line-height:13.41px;color:#222;font-family:'Liberation Sans', sans-serif;letter-spacing:-0.078px;">SalesForce - Prystupa WSM</div>
<div class="r" style="left:1425.1px;top:236.6px;width:10px;height:15px;box-sizing:border-box;border:1px solid #dedede;border-radius:3px;"></div>
<div class="t" style="left:1425.10px;top:238.74px;font-size:10.8px;line-height:12.07px;color:#a5a5a5;font-family:'Liberation Sans', sans-serif;width:10px;text-align:center;">1</div>
<svg class="r" style="left:1230.5px;top:260.03999999999996px" width="9" height="6" viewBox="0 0 9 6"><path d="M0.8 0.8l3.7 4 3.7-4" fill="none" stroke="#ffffff" stroke-width="1.2"/></svg>
<svg class="r" style="left:1247px;top:256.03999999999996px" width="13" height="13" viewBox="0 0 13 13"><rect x="0" y="0" width="13" height="13" fill="#3f7cc9"/><rect x="0" y="0" width="1.6" height="13" fill="#c0c6cd"/><rect x="0" y="0" width="13" height="1.6" fill="#b3bcc5"/><rect x="11.4" y="0.6" width="1.6" height="12.4" fill="#6cbde6"/><rect x="0.6" y="11.4" width="12.4" height="1.6" fill="#6cbde6"/><circle cx="4.6" cy="1.9" r="0.8" fill="#b3bcc5"/><circle cx="8.4" cy="1.9" r="0.8" fill="#b3bcc5"/><circle cx="1.9" cy="4.6" r="0.8" fill="#c0c6cd"/><circle cx="1.9" cy="8.4" r="0.8" fill="#c0c6cd"/><circle cx="11.1" cy="4.6" r="0.8" fill="#6cbde6"/><circle cx="11.1" cy="8.4" r="0.8" fill="#6cbde6"/><circle cx="4.6" cy="11.1" r="0.8" fill="#6cbde6"/><circle cx="8.4" cy="11.1" r="0.8" fill="#6cbde6"/><circle cx="11.3" cy="11.8" r="1.7" fill="#3cc13c"/></svg>
<div class="t" style="left:1267.20px;top:257.48px;font-size:12px;line-height:13.41px;color:#ffffff;font-family:'Liberation Sans', sans-serif;letter-spacing:-0.212px;">SalesforceSOQL STEAM A</div>
<div class="r" style="left:1416.0px;top:255.3px;width:10px;height:15px;box-sizing:border-box;border:1px solid #ffffff;border-radius:3px;"></div>
<div class="t" style="left:1416.00px;top:257.46px;font-size:10.8px;line-height:12.07px;color:#ffffff;font-family:'Liberation Sans', sans-serif;width:10px;text-align:center;">1</div>
<svg class="r" style="left:1247.5px;top:278.76px" width="9" height="6" viewBox="0 0 9 6"><path d="M0.8 0.8l3.7 4 3.7-4" fill="none" stroke="#8c8c8c" stroke-width="1.2"/></svg>
<svg class="r" style="left:1263.5px;top:274.76px" width="14" height="13" viewBox="0 0 14 13"><rect x="4.4" y="0.4" width="9.2" height="9.2" fill="#fff" stroke="#8ec7ea" stroke-width="0.9"/><rect x="2.4" y="1.9" width="9.2" height="9.2" fill="#fff" stroke="#8ec7ea" stroke-width="0.9"/><rect x="0" y="3.3" width="9.8" height="9.7" fill="#8ec7ea"/></svg>
<div class="t" style="left:1283.80px;top:276.20px;font-size:12px;line-height:13.41px;color:#222;font-family:'Liberation Sans', sans-serif;">database</div>
<div class="r" style="left:1341.0px;top:274.1px;width:10px;height:15px;box-sizing:border-box;border:1px solid #dedede;border-radius:3px;"></div>
<div class="t" style="left:1341.00px;top:276.18px;font-size:10.8px;line-height:12.07px;color:#a5a5a5;font-family:'Liberation Sans', sans-serif;width:10px;text-align:center;">1</div>
<svg class="r" style="left:1264px;top:297.48px" width="9" height="6" viewBox="0 0 9 6"><path d="M0.8 0.8l3.7 4 3.7-4" fill="none" stroke="#8c8c8c" stroke-width="1.2"/></svg>
<svg class="r" style="left:1280.5px;top:293.48px" width="13" height="13" viewBox="0 0 13 13"><rect x="0" y="5.5" width="5" height="7" fill="#8ec7ea"/><rect x="7.5" y="0" width="5.5" height="5" fill="#8ec7ea"/><rect x="7.5" y="7.5" width="5.5" height="5" fill="#8ec7ea"/><path d="M5 9h2.5M10 5v2.5" stroke="#8ec7ea" stroke-width="1"/></svg>
<div class="t" style="left:1300.70px;top:294.92px;font-size:12px;line-height:13.41px;color:#222;font-family:'Liberation Sans', sans-serif;letter-spacing:-0.169px;">Salesforce</div>
<svg class="r" style="left:1281.5px;top:314.2px" width="6" height="9" viewBox="0 0 6 9"><path d="M0.8 0.8l4 3.7-4 3.7" fill="none" stroke="#8c8c8c" stroke-width="1.2"/></svg>
<svg class="r" style="left:1297px;top:313.2px" width="14" height="12" viewBox="0 0 14 12"><rect x="0.5" y="0.5" width="13" height="11" fill="#fff" stroke="#a9a9a9" stroke-width="1"/><rect x="0.5" y="0.5" width="13" height="2.5" fill="#b9b9b9"/><path d="M0.5 5.5h13M0.5 8.5h13M5 0.5v11M9.5 0.5v11" stroke="#b9b9b9" stroke-width="0.9"/></svg>
<div class="t" style="left:1317.70px;top:313.64px;font-size:12px;line-height:13.41px;color:#222;font-family:'Liberation Sans', sans-serif;">AcceptedEventRelation</div>
<svg class="r" style="left:1281px;top:334.91999999999996px" width="9" height="6" viewBox="0 0 9 6"><path d="M0.8 0.8l3.7 4 3.7-4" fill="none" stroke="#8c8c8c" stroke-width="1.2"/></svg>
<svg class="r" style="left:1297px;top:331.91999999999996px" width="14" height="12" viewBox="0 0 14 12"><rect x="0.5" y="0.5" width="13" height="11" fill="#fff" stroke="#a9a9a9" stroke-width="1"/><rect x="0.5" y="0.5" width="13" height="2.5" fill="#b9b9b9"/><path d="M0.5 5.5h13M0.5 8.5h13M5 0.5v11M9.5 0.5v11" stroke="#b9b9b9" stroke-width="0.9"/></svg>
<div class="t" style="left:1317.70px;top:332.36px;font-size:12px;line-height:13.41px;color:#222;font-family:'Liberation Sans', sans-serif;">Account</div>
<div class="r" style="left:1224px;top:122px;width:357px;height:477px;overflow:hidden;">
<div class="r" style="left:-1224px;top:-122px;width:1612px;height:612px;">
<svg class="r" style="left:1313px;top:351.14px" width="16" height="14" viewBox="0 0 16 14"><rect x="0.8" y="0" width="4.2" height="9.5" fill="#86c8ea"/><circle cx="2.6" cy="11" r="2.3" fill="#606060"/><rect x="6.6" y="0" width="8.2" height="1.8" fill="#b9bec4"/><path d="M6.8 3.8h2.2M6.8 6.5h2.2M6.8 9.3h2.2" stroke="#b9bec4" stroke-width="1"/><circle cx="12.2" cy="4.9" r="2.3" fill="none" stroke="#e3a93a" stroke-width="1.8"/><path d="M12.2 7v6.2M12.2 9.8h1.9M12.2 12h1.7" stroke="#e3a93a" stroke-width="1.6"/></svg>
<div class="t" style="left:1334.40px;top:351.18px;font-size:12px;line-height:13.41px;color:#222;font-family:'Liberation Sans', sans-serif;letter-spacing:0.066px;">Id</div>
<div class="t" style="left:1354.40px;top:352.12px;font-size:10.3px;line-height:11.51px;color:#a8a8a8;font-family:'Liberation Sans', sans-serif;">id(0)</div>
<svg class="r" style="left:1313px;top:369.86px" width="16" height="14" viewBox="0 0 16 14"><rect x="0.8" y="0" width="4.2" height="9.5" fill="#b7bcc2"/><circle cx="2.6" cy="11" r="2.3" fill="#606060"/><rect x="6.6" y="0" width="8.2" height="2" fill="#aeb4ba"/><path d="M7.1 2v8.7h7.2V2M6.6 5.3h8.2M6.6 8h8.2M10.7 2v8.7" fill="none" stroke="#aeb4ba" stroke-width="1"/></svg>
<div class="t" style="left:1334.40px;top:369.90px;font-size:12px;line-height:13.41px;color:#222;font-family:'Liberation Sans', sans-serif;letter-spacing:-0.078px;">IsDeleted</div>
<div class="t" style="left:1395.20px;top:370.84px;font-size:10.3px;line-height:11.51px;color:#a8a8a8;font-family:'Liberation Sans', sans-serif;">boolean</div>
<svg class="r" style="left:1313px;top:388.58px" width="16" height="14" viewBox="0 0 16 14"><rect x="0.8" y="0" width="4.2" height="9.5" fill="#b7bcc2"/><circle cx="2.6" cy="11" r="2.3" fill="#606060"/><rect x="6.6" y="0" width="8.2" height="1.8" fill="#b9bec4"/><path d="M6.8 3.8h2.2M6.8 6.5h2.2M6.8 9.3h2.2" stroke="#b9bec4" stroke-width="1"/><circle cx="12.2" cy="4.9" r="2.3" fill="none" stroke="#45a8e6" stroke-width="1.8"/><path d="M12.2 7v6.2M12.2 9.8h1.9M12.2 12h1.7" stroke="#45a8e6" stroke-width="1.6"/></svg>
<div class="t" style="left:1334.40px;top:388.62px;font-size:12px;line-height:13.41px;color:#222;font-family:'Liberation Sans', sans-serif;letter-spacing:-0.007px;">MasterRecordId</div>
<div class="t" style="left:1430.40px;top:389.56px;font-size:10.3px;line-height:11.51px;color:#a8a8a8;font-family:'Liberation Sans', sans-serif;">reference(0)</div>
<svg class="r" style="left:1313px;top:407.29999999999995px" width="16" height="14" viewBox="0 0 16 14"><rect x="0.8" y="0" width="4.2" height="9.5" fill="#b7bcc2"/><circle cx="2.6" cy="11" r="2.3" fill="#606060"/><rect x="6.6" y="0" width="8.2" height="2" fill="#aeb4ba"/><path d="M7.1 2v8.7h7.2V2M6.6 5.3h8.2M6.6 8h8.2M10.7 2v8.7" fill="none" stroke="#aeb4ba" stroke-width="1"/></svg>
<div class="t" style="left:1334.40px;top:407.34px;font-size:12px;line-height:13.41px;color:#222;font-family:'Liberation Sans', sans-serif;letter-spacing:-0.312px;">Name</div>
<div class="t" style="left:1376.40px;top:408.28px;font-size:10.3px;line-height:11.51px;color:#a8a8a8;font-family:'Liberation Sans', sans-serif;">string(0)</div>
<svg class="r" style="left:1313px;top:426.02px" width="16" height="14" viewBox="0 0 16 14"><rect x="0.8" y="0" width="4.2" height="9.5" fill="#b7bcc2"/><circle cx="2.6" cy="11" r="2.3" fill="#606060"/><rect x="6.6" y="0" width="8.2" height="2" fill="#aeb4ba"/><path d="M7.1 2v8.7h7.2V2M6.6 5.3h8.2M6.6 8h8.2M10.7 2v8.7" fill="none" stroke="#aeb4ba" stroke-width="1"/></svg>
<div class="t" style="left:1334.40px;top:426.06px;font-size:12px;line-height:13.41px;color:#222;font-family:'Liberation Sans', sans-serif;letter-spacing:-0.203px;">LastName</div>
<div class="t" style="left:1398.50px;top:427.00px;font-size:10.3px;line-height:11.51px;color:#a8a8a8;font-family:'Liberation Sans', sans-serif;">string(0)</div>
<svg class="r" style="left:1313px;top:444.74px" width="16" height="14" viewBox="0 0 16 14"><rect x="0.8" y="0" width="4.2" height="9.5" fill="#b7bcc2"/><circle cx="2.6" cy="11" r="2.3" fill="#606060"/><rect x="6.6" y="0" width="8.2" height="2" fill="#aeb4ba"/><path d="M7.1 2v8.7h7.2V2M6.6 5.3h8.2M6.6 8h8.2M10.7 2v8.7" fill="none" stroke="#aeb4ba" stroke-width="1"/></svg>
<div class="t" style="left:1334.40px;top:444.78px;font-size:12px;line-height:13.41px;color:#222;font-family:'Liberation Sans', sans-serif;letter-spacing:-0.133px;">FirstName</div>
<div class="t" style="left:1399.40px;top:445.72px;font-size:10.3px;line-height:11.51px;color:#a8a8a8;font-family:'Liberation Sans', sans-serif;">string(0)</div>
<svg class="r" style="left:1313px;top:463.46px" width="16" height="14" viewBox="0 0 16 14"><rect x="0.8" y="0" width="4.2" height="9.5" fill="#b7bcc2"/><circle cx="2.6" cy="11" r="2.3" fill="#606060"/><rect x="6.6" y="0" width="8.2" height="2" fill="#aeb4ba"/><path d="M7.1 2v8.7h7.2V2M6.6 5.3h8.2M6.6 8h8.2M10.7 2v8.7" fill="none" stroke="#aeb4ba" stroke-width="1"/></svg>
<div class="t" style="left:1334.40px;top:463.50px;font-size:12px;line-height:13.41px;color:#222;font-family:'Liberation Sans', sans-serif;letter-spacing:0.011px;">Salutation</div>
<div class="t" style="left:1397.60px;top:464.44px;font-size:10.3px;line-height:11.51px;color:#a8a8a8;font-family:'Liberation Sans', sans-serif;">picklist(0)</div>
<svg class="r" style="left:1313px;top:482.17999999999995px" width="16" height="14" viewBox="0 0 16 14"><rect x="0.8" y="0" width="4.2" height="9.5" fill="#b7bcc2"/><circle cx="2.6" cy="11" r="2.3" fill="#606060"/><rect x="6.6" y="0" width="8.2" height="2" fill="#aeb4ba"/><path d="M7.1 2v8.7h7.2V2M6.6 5.3h8.2M6.6 8h8.2M10.7 2v8.7" fill="none" stroke="#aeb4ba" stroke-width="1"/></svg>
<div class="t" style="left:1334.40px;top:482.22px;font-size:12px;line-height:13.41px;color:#222;font-family:'Liberation Sans', sans-serif;letter-spacing:-0.314px;">Type</div>
<div class="t" style="left:1370.20px;top:483.16px;font-size:10.3px;line-height:11.51px;color:#a8a8a8;font-family:'Liberation Sans', sans-serif;">picklist(0)</div>
<svg class="r" style="left:1313px;top:500.9px" width="16" height="14" viewBox="0 0 16 14"><rect x="0.8" y="0" width="4.2" height="9.5" fill="#b7bcc2"/><circle cx="2.6" cy="11" r="2.3" fill="#606060"/><rect x="6.6" y="0" width="8.2" height="1.8" fill="#b9bec4"/><path d="M6.8 3.8h2.2M6.8 6.5h2.2M6.8 9.3h2.2" stroke="#b9bec4" stroke-width="1"/><circle cx="12.2" cy="4.9" r="2.3" fill="none" stroke="#45a8e6" stroke-width="1.8"/><path d="M12.2 7v6.2M12.2 9.8h1.9M12.2 12h1.7" stroke="#45a8e6" stroke-width="1.6"/></svg>
<div class="t" style="left:1334.40px;top:500.94px;font-size:12px;line-height:13.41px;color:#222;font-family:'Liberation Sans', sans-serif;letter-spacing:0.07px;">RecordTypeId</div>
<div class="t" style="left:1420.20px;top:501.88px;font-size:10.3px;line-height:11.51px;color:#a8a8a8;font-family:'Liberation Sans', sans-serif;">reference(0)</div>
<svg class="r" style="left:1313px;top:519.62px" width="16" height="14" viewBox="0 0 16 14"><rect x="0.8" y="0" width="4.2" height="9.5" fill="#b7bcc2"/><circle cx="2.6" cy="11" r="2.3" fill="#606060"/><rect x="6.6" y="0" width="8.2" height="1.8" fill="#b9bec4"/><path d="M6.8 3.8h2.2M6.8 6.5h2.2M6.8 9.3h2.2" stroke="#b9bec4" stroke-width="1"/><circle cx="12.2" cy="4.9" r="2.3" fill="none" stroke="#45a8e6" stroke-width="1.8"/><path d="M12.2 7v6.2M12.2 9.8h1.9M12.2 12h1.7" stroke="#45a8e6" stroke-width="1.6"/></svg>
<div class="t" style="left:1334.40px;top:519.66px;font-size:12px;line-height:13.41px;color:#222;font-family:'Liberation Sans', sans-serif;letter-spacing:-0.127px;">ParentId</div>
<div class="t" style="left:1389.00px;top:520.60px;font-size:10.3px;line-height:11.51px;color:#a8a8a8;font-family:'Liberation Sans', sans-serif;">reference(0)</div>
<svg class="r" style="left:1313px;top:538.3399999999999px" width="16" height="14" viewBox="0 0 16 14"><rect x="0.8" y="0" width="4.2" height="9.5" fill="#b7bcc2"/><circle cx="2.6" cy="11" r="2.3" fill="#606060"/><rect x="6.6" y="0" width="8.2" height="2" fill="#aeb4ba"/><path d="M7.1 2v8.7h7.2V2M6.6 5.3h8.2M6.6 8h8.2M10.7 2v8.7" fill="none" stroke="#aeb4ba" stroke-width="1"/></svg>
<div class="t" style="left:1334.40px;top:538.38px;font-size:12px;line-height:13.41px;color:#222;font-family:'Liberation Sans', sans-serif;letter-spacing:0.025px;">BillingStreet</div>
<div class="t" style="left:1409.80px;top:539.32px;font-size:10.3px;line-height:11.51px;color:#a8a8a8;font-family:'Liberation Sans', sans-serif;">textarea(0)</div>
<svg class="r" style="left:1313px;top:557.06px" width="16" height="14" viewBox="0 0 16 14"><rect x="0.8" y="0" width="4.2" height="9.5" fill="#b7bcc2"/><circle cx="2.6" cy="11" r="2.3" fill="#606060"/><rect x="6.6" y="0" width="8.2" height="2" fill="#aeb4ba"/><path d="M7.1 2v8.7h7.2V2M6.6 5.3h8.2M6.6 8h8.2M10.7 2v8.7" fill="none" stroke="#aeb4ba" stroke-width="1"/></svg>
<div class="t" style="left:1334.40px;top:557.10px;font-size:12px;line-height:13.41px;color:#222;font-family:'Liberation Sans', sans-serif;letter-spacing:0.092px;">BillingCity</div>
<div class="t" style="left:1398.50px;top:558.04px;font-size:10.3px;line-height:11.51px;color:#a8a8a8;font-family:'Liberation Sans', sans-serif;">string(0)</div>
<svg class="r" style="left:1313px;top:575.78px" width="16" height="14" viewBox="0 0 16 14"><rect x="0.8" y="0" width="4.2" height="9.5" fill="#b7bcc2"/><circle cx="2.6" cy="11" r="2.3" fill="#606060"/><rect x="6.6" y="0" width="8.2" height="2" fill="#aeb4ba"/><path d="M7.1 2v8.7h7.2V2M6.6 5.3h8.2M6.6 8h8.2M10.7 2v8.7" fill="none" stroke="#aeb4ba" stroke-width="1"/></svg>
<div class="t" style="left:1334.40px;top:575.82px;font-size:12px;line-height:13.41px;color:#222;font-family:'Liberation Sans', sans-serif;letter-spacing:-0.015px;">BillingState</div>
<div class="t" style="left:1405.00px;top:576.76px;font-size:10.3px;line-height:11.51px;color:#a8a8a8;font-family:'Liberation Sans', sans-serif;">string(0)</div>
<svg class="r" style="left:1313px;top:594.5px" width="16" height="14" viewBox="0 0 16 14"><rect x="0.8" y="0" width="4.2" height="9.5" fill="#b7bcc2"/><circle cx="2.6" cy="11" r="2.3" fill="#606060"/><rect x="6.6" y="0" width="8.2" height="2" fill="#aeb4ba"/><path d="M7.1 2v8.7h7.2V2M6.6 5.3h8.2M6.6 8h8.2M10.7 2v8.7" fill="none" stroke="#aeb4ba" stroke-width="1"/></svg>
<div class="t" style="left:1334.40px;top:594.54px;font-size:12px;line-height:13.41px;color:#222;font-family:'Liberation Sans', sans-serif;">BillingPostalCode</div>
<div class="t" style="left:1439.45px;top:595.48px;font-size:10.3px;line-height:11.51px;color:#a8a8a8;font-family:'Liberation Sans', sans-serif;">string(0)</div>
</div></div>
<svg class="r" style="left:1286px;top:334px" width="10" height="16" viewBox="0 0 10 16"><path d="M1 1v12.5l3-3 2.2 4.8 2-0.9-2.1-4.7H10z" fill="#111" stroke="#fff" stroke-width="0.9"/></svg>
<div class="r" style="left:1589px;top:69px;width:1px;height:531px;background:#d1d1d1;"></div>
<div class="r" style="left:1590px;top:69px;width:19px;height:543px;background:#f2f2f2;"></div>
<div class="r" style="left:1609px;top:0px;width:3px;height:612px;background:#ededed;"></div>
<div class="r" style="left:1608.5px;top:0px;width:1px;height:612px;background:#dcdcdc;"></div>
<div class="r" style="left:1590px;top:333px;width:19px;height:78.5px;background:#cdcdcd;"></div>
<svg class="r" style="left:1591.5px;top:76px" width="14" height="12" viewBox="0 0 14 12"><circle cx="3" cy="3.8" r="2.4" fill="#444"/><circle cx="11.3" cy="3.8" r="2.4" fill="#444"/><circle cx="5.2" cy="7.5" r="1.6" fill="#555"/><circle cx="9.5" cy="7.5" r="1.6" fill="#555"/><circle cx="7.3" cy="9.6" r="0.9" fill="#666"/></svg>
<div class="t" style="left:1599.5px;top:108px;font-size:10.3px;line-height:11.85px;color:#2b2b2b;font-family:'Liberation Sans', sans-serif;transform:translate(-50%,-50%) rotate(90deg);">Panda</div>
<svg class="r" style="left:1594.5px;top:143px" width="10" height="8" viewBox="0 0 10 8"><rect x="0" y="0.0" width="1.6" height="1.6" fill="#555"/><rect x="3" y="0.0" width="6" height="1.6" fill="#555"/><rect x="0" y="2.95" width="1.6" height="1.6" fill="#555"/><rect x="3" y="2.95" width="6" height="1.6" fill="#555"/><rect x="0" y="5.9" width="1.6" height="1.6" fill="#555"/><rect x="3" y="5.9" width="6" height="1.6" fill="#555"/></svg>
<div class="t" style="left:1599.5px;top:173.4px;font-size:10.1px;line-height:11.61px;color:#2b2b2b;font-family:'Liberation Sans', sans-serif;transform:translate(-50%,-50%) rotate(90deg);">Indices</div>
<div class="t" style="left:1593.00px;top:204.73px;font-size:13px;line-height:14.52px;color:#6e6e6e;font-family:'Liberation Sans', sans-serif;font-weight:bold;"><i>m</i></div>
<div class="t" style="left:1599.5px;top:236.8px;font-size:10.1px;line-height:11.61px;color:#2b2b2b;font-family:'Liberation Sans', sans-serif;transform:translate(-50%,-50%) rotate(90deg);">Maven</div>
<svg class="r" style="left:1594px;top:275px" width="11" height="8" viewBox="0 0 11 8"><rect x="0" y="0" width="1.7" height="1.7" fill="#555"/><rect x="3.2" y="0" width="4.2" height="1.7" fill="#555"/><rect x="8.7" y="0" width="1.7" height="1.7" fill="#555"/><rect x="0" y="3" width="1.7" height="1.7" fill="#555"/><rect x="3.2" y="3" width="4.2" height="1.7" fill="#555"/><rect x="8.7" y="3" width="1.7" height="1.7" fill="#555"/><rect x="0" y="6" width="1.7" height="1.7" fill="#555"/><rect x="3.2" y="6" width="4.2" height="1.7" fill="#555"/><rect x="8.7" y="6" width="1.7" height="1.7" fill="#555"/></svg>
<div class="t" style="left:1599.5px;top:306.4px;font-size:10.1px;line-height:11.61px;color:#2b2b2b;font-family:'Liberation Sans', sans-serif;transform:translate(-50%,-50%) rotate(90deg);">SciView</div>
<svg class="r" style="left:1594px;top:343.5px" width="10" height="11" viewBox="0 0 10 11"><ellipse cx="5" cy="2" rx="4.5" ry="1.8" fill="#8a8a8a"/><path d="M0.5 2v7c0 1 2 1.8 4.5 1.8S9.5 10 9.5 9V2" fill="#8a8a8a"/><path d="M0.5 5c0 1 2 1.8 4.5 1.8S9.5 6 9.5 5M0.5 7.5c0 1 2 1.8 4.5 1.8S9.5 8.5 9.5 7.5" fill="none" stroke="#cdcdcd" stroke-width="0.7"/></svg>
<div class="t" style="left:1599.5px;top:381px;font-size:10.3px;line-height:11.85px;color:#2b2b2b;font-family:'Liberation Sans', sans-serif;transform:translate(-50%,-50%) rotate(90deg);">Database</div>
<svg class="r" style="left:1547px;top:604px" width="11" height="11" viewBox="0 0 11 11"><g transform="translate(5.5 5.5)"><circle r="3.8" fill="#6e6e6e"/><rect x="-1.2" y="-5.5" width="2.4" height="2.8" fill="#6e6e6e" transform="rotate(0)"/><rect x="-1.2" y="-5.5" width="2.4" height="2.8" fill="#6e6e6e" transform="rotate(45)"/><rect x="-1.2" y="-5.5" width="2.4" height="2.8" fill="#6e6e6e" transform="rotate(90)"/><rect x="-1.2" y="-5.5" width="2.4" height="2.8" fill="#6e6e6e" transform="rotate(135)"/><rect x="-1.2" y="-5.5" width="2.4" height="2.8" fill="#6e6e6e" transform="rotate(180)"/><rect x="-1.2" y="-5.5" width="2.4" height="2.8" fill="#6e6e6e" transform="rotate(225)"/><rect x="-1.2" y="-5.5" width="2.4" height="2.8" fill="#6e6e6e" transform="rotate(270)"/><rect x="-1.2" y="-5.5" width="2.4" height="2.8" fill="#6e6e6e" transform="rotate(315)"/><circle r="1.6" fill="#f2f2f2"/></g></svg>
<div class="r" style="left:1571px;top:610.5px;width:12px;height:1.5px;background:#6e6e6e;"></div>
</body></html>
